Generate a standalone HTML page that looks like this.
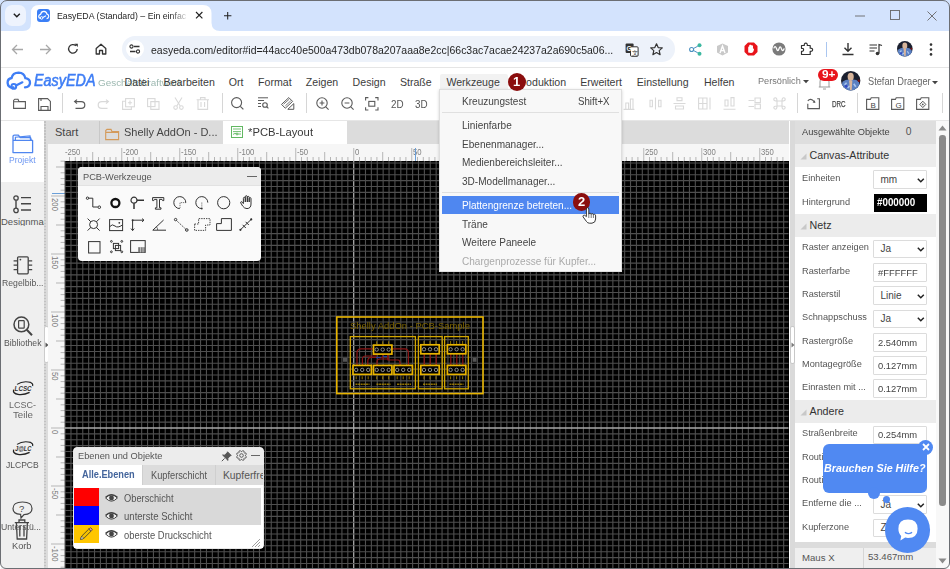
<!DOCTYPE html><html><head><meta charset="utf-8"><style>
*{margin:0;padding:0;box-sizing:border-box}
html,body{width:950px;height:569px;overflow:hidden;background:#fff}
body{position:relative;font-family:"Liberation Sans",sans-serif}
.a{position:absolute}
.t{line-height:1;white-space:nowrap}
svg{overflow:visible}
</style></head><body><div class="a" style="left:0px;top:0px;width:950px;height:31px;background:#d3e3fd"></div>
<div class="a" style="left:5px;top:5px;width:21px;height:21px;background:#eef3fd;border-radius:7px"></div>
<svg class="a" style="left:13px;top:13px;" width="8" height="5" viewBox="0 0 8 5"><path d="M0.8 0.8 L3.8 3.8 L6.8 0.8" stroke="#1f1f1f" stroke-width="1.4" fill="none"/></svg>
<svg class="a" style="left:23px;top:5px" width="198" height="26" viewBox="0 0 198 26"><path d="M0 26 Q8 26 8 18 L8 8 Q8 0 16 0 L180 0 Q188 0 188.5 8 L188.5 18 Q189 26 197 26 Z" fill="#fff"/></svg>
<div class="a" style="left:37px;top:9px;width:13px;height:13px;background:#3b7ff6;border-radius:3px"></div>
<svg class="a" style="left:37px;top:9px;" width="13" height="13" viewBox="0 0 13 13"><path d="M3.4 9.4 Q1.6 9.2 1.7 7.2 Q1.9 5.4 3.6 5.3 Q4.2 2.2 7 2.3 Q9.6 2.5 10 5.2 Q11.8 5.6 11.7 7.4 Q11.5 9.4 9.6 9.6" stroke="#fff" stroke-width="1.2" fill="none"/><circle cx="4.6" cy="8.9" r="1.3" stroke="#fff" stroke-width="1" fill="none"/><path d="M5.8 8.4 L9 6.8" stroke="#fff" stroke-width="1.1"/></svg>
<div class="a t" style="left:56.6px;top:11.29px;font-size:9.7px;color:#1f1f1f;transform:scaleX(0.9050);transform-origin:0 0;-webkit-mask-image:linear-gradient(90deg,#000 88%,rgba(0,0,0,0.15))">EasyEDA (Standard) – Ein einfac</div>
<svg class="a" style="left:195.8px;top:12.3px;" width="6.4" height="6.4" viewBox="0 0 6.4 6.4"><path d="M0 0 L6.4 6.4 M6.4 0 L0 6.4" stroke="#222" stroke-width="1.15"/></svg>
<svg class="a" style="left:223.7px;top:11.6px;" width="7.4" height="7.4" viewBox="0 0 7.4 7.4"><path d="M3.7 0 V7.4 M0 3.7 H7.4" stroke="#222" stroke-width="1.05"/></svg>
<svg class="a" style="left:855px;top:15px;" width="10" height="2" viewBox="0 0 10 2"><path d="M0 1 H10" stroke="#666" stroke-width="0.9"/></svg>
<svg class="a" style="left:890px;top:10px;" width="10" height="10" viewBox="0 0 10 10"><rect x="0.5" y="0.5" width="9" height="9" fill="none" stroke="#666" stroke-width="0.9"/></svg>
<svg class="a" style="left:927px;top:10.5px;" width="10" height="10" viewBox="0 0 10 10"><path d="M0.5 0.5 L9.5 9.5 M9.5 0.5 L0.5 9.5" stroke="#666" stroke-width="0.9"/></svg>
<div class="a" style="left:0px;top:31px;width:950px;height:37px;background:#fff;border-bottom:1px solid #e5e5e5"></div>
<svg class="a" style="left:11px;top:44px;" width="13" height="11" viewBox="0 0 13 11"><path d="M12 5.5 H1.5 M6 1 L1.5 5.5 L6 10" stroke="#a8a8a8" stroke-width="1.3" fill="none"/></svg>
<svg class="a" style="left:39px;top:44px;" width="13" height="11" viewBox="0 0 13 11"><path d="M1 5.5 H11.5 M7 1 L11.5 5.5 L7 10" stroke="#a8a8a8" stroke-width="1.3" fill="none"/></svg>
<svg class="a" style="left:67px;top:43px;" width="12" height="12" viewBox="0 0 12 12"><path d="M10.2 6 A4.3 4.3 0 1 1 8.9 2.8" stroke="#333" stroke-width="1.3" fill="none"/><path d="M7.5 0.8 L10.8 0.8 L10.8 4.1 Z" fill="#333"/></svg>
<svg class="a" style="left:95px;top:43px;" width="12" height="12" viewBox="0 0 12 12"><path d="M1.2 5.5 L6 1.2 L10.8 5.5 V11 H7.5 V7.5 H4.5 V11 H1.2 Z" stroke="#333" stroke-width="1.3" fill="none" stroke-linejoin="round"/></svg>
<div class="a" style="left:121.5px;top:36px;width:553px;height:26px;background:#edf2fa;border-radius:13px"></div>
<div class="a" style="left:125.5px;top:40px;width:18px;height:18px;background:#fff;border-radius:9px"></div>
<svg class="a" style="left:129px;top:44px;" width="12" height="10" viewBox="0 0 12 10"><circle cx="2.5" cy="2.5" r="1.6" stroke="#333" stroke-width="1.1" fill="none"/><path d="M5 2.5 H10.5 M1 7.5 H6.5" stroke="#333" stroke-width="1.3"/><circle cx="9" cy="7.5" r="1.6" stroke="#333" stroke-width="1.1" fill="none"/></svg>
<div class="a t" style="left:150.5px;top:45.21px;font-size:10.5px;color:#1f1f1f;transform:scaleX(0.9982);transform-origin:0 0;">easyeda.com/editor#id=44acc40e500a473db078a207aaa8e2cc|66c3ac7acae24237a2a690c5a06...</div>
<svg class="a" style="left:625px;top:43px;" width="14" height="14" viewBox="0 0 14 14"><rect x="0.6" y="0.6" width="8" height="9.5" rx="1" fill="#333"/><rect x="5.5" y="3.8" width="7.6" height="9.5" rx="1" fill="#fff" stroke="#333" stroke-width="1"/><text x="1.6" y="8" font-size="6.5" fill="#fff" font-family="Liberation Sans" font-weight="bold">G</text><text x="7" y="11.5" font-size="6" fill="#333" font-family="Liberation Sans">文</text></svg>
<svg class="a" style="left:650px;top:43px;" width="13" height="13" viewBox="0 0 13 13"><path d="M6.5 0.8 L8.2 4.6 L12.3 4.9 L9.2 7.6 L10.1 11.7 L6.5 9.6 L2.9 11.7 L3.8 7.6 L0.7 4.9 L4.8 4.6 Z" stroke="#333" stroke-width="1.2" fill="none" stroke-linejoin="round"/></svg>
<svg class="a" style="left:689px;top:43px;" width="13" height="13" viewBox="0 0 13 13"><circle cx="2.6" cy="6.5" r="2" fill="none" stroke="#4a90c0" stroke-width="1.1"/><circle cx="10.5" cy="2.3" r="2" fill="#3bb8a0"/><circle cx="10.5" cy="10.7" r="2" fill="#3bb8a0"/><path d="M4.3 5.6 L8.8 3.2 M4.3 7.4 L8.8 9.8" stroke="#4a90c0" stroke-width="1"/></svg>
<svg class="a" style="left:716px;top:43px;" width="13" height="13" viewBox="0 0 13 13"><path d="M6.5 0.5 L12 3 V9.5 L6.5 12.5 L1 9.5 V3 Z" fill="#c9c9c9"/><path d="M4 10 L6.5 3 L9 10 M5 7.6 H8" stroke="#fff" stroke-width="1.4" fill="none"/></svg>
<svg class="a" style="left:744px;top:42px;" width="14" height="14" viewBox="0 0 14 14"><path d="M4 0.5 H10 L13.5 4 V10 L10 13.5 H4 L0.5 10 V4 Z" fill="#e8141b"/><path d="M4.2 10.5 V5.5 Q4.2 4.3 5.2 4.6 V3.4 Q5.3 2.6 6.3 2.8 Q7.3 2.5 7.7 3.4 Q8.6 3.1 9 4 V6.7 Q9.9 6.3 10 7.3 Q9.6 10.8 7 11 Z" fill="#fff"/></svg>
<svg class="a" style="left:772px;top:42px;" width="14" height="14" viewBox="0 0 14 14"><circle cx="7" cy="7" r="6.6" fill="#7b7b7b"/><path d="M1.8 6.4 Q3.2 2.6 4.6 6.8 Q5.8 10.6 7 6.8 Q8.2 3 9.4 6.8 Q10.8 10.6 12.2 6.4" stroke="#fff" stroke-width="1.3" fill="none"/></svg>
<svg class="a" style="left:800px;top:42px;" width="14" height="14" viewBox="0 0 14 14"><path d="M1.5 3.5 H4.3 Q4 1.2 5.8 1.2 Q7.5 1.2 7.3 3.5 H10.2 V6.2 Q12.6 6 12.6 7.8 Q12.6 9.6 10.2 9.4 V12.5 H1.5 V9.4 Q3.6 9.5 3.6 7.8 Q3.6 6.1 1.5 6.3 Z" stroke="#333" stroke-width="1.2" fill="none" stroke-linejoin="round"/></svg>
<div class="a" style="left:826px;top:42px;width:1px;height:15px;background:#aac6f0"></div>
<svg class="a" style="left:841px;top:42px;" width="14" height="14" viewBox="0 0 14 14"><path d="M7 1 V9 M3.5 5.8 L7 9.3 L10.5 5.8 M1.5 12.5 H12.5" stroke="#333" stroke-width="1.4" fill="none"/></svg>
<svg class="a" style="left:869px;top:43px;" width="14" height="13" viewBox="0 0 14 13"><path d="M0.5 2 H8 M0.5 5 H8 M0.5 8 H5.5" stroke="#333" stroke-width="1.2"/><path d="M10 10.5 V1.5 L13 2.5" stroke="#333" stroke-width="1.2" fill="none"/><circle cx="8.5" cy="10.5" r="1.8" fill="#333"/></svg>
<svg class="a" style="left:896.70px;top:40.90px" width="15.60" height="15.60" viewBox="-9.5 -9.5 19 19"><defs><clipPath id="ca1"><circle cx="0" cy="0" r="9.5"/></clipPath></defs><g clip-path="url(#ca1)"><rect x="-10" y="-10" width="20" height="20" fill="#1a1f2e"/><path d="M-10 10 L-8 1 Q-4 -2 0 -1 Q5 -2 8 1 L10 10 Z" fill="#5b80c2"/><path d="M-6 4 L-4 2 M3 3 L5 6 M-3 7 L-1 5" stroke="#a8c4ee" stroke-width="1.6"/><circle cx="-4.5" cy="5.5" r="1.3" fill="#3046c8"/><ellipse cx="0" cy="-3.8" rx="3" ry="4" fill="#d6b49a"/><path d="M-1.6 0 L1.6 0 L1 9 L-0.6 9 Z" fill="#d9b59c"/><circle cx="8" cy="0" r="1.2" fill="#7a1010"/></g></svg>
<svg class="a" style="left:929px;top:43px;" width="4" height="13" viewBox="0 0 4 13"><circle cx="2" cy="1.6" r="1.3" fill="#333"/><circle cx="2" cy="6.5" r="1.3" fill="#333"/><circle cx="2" cy="11.4" r="1.3" fill="#333"/></svg>
<svg class="a" style="left:6px;top:71px;" width="26" height="19" viewBox="0 0 26 19"><path d="M7.5 16.5 Q2 16.8 1.6 11.8 Q1.6 7.6 5.6 7 Q6.8 1.6 12.6 1.6 Q18.3 1.8 19.4 7.2 Q24.2 7.8 24 12.2 Q23.6 16.3 19 16.4" stroke="#3f7ef5" stroke-width="2.3" fill="none" stroke-linecap="round"/><circle cx="7.8" cy="15.4" r="2.4" stroke="#3f7ef5" stroke-width="2" fill="none"/><path d="M10 14.4 L16.4 11.3" stroke="#3f7ef5" stroke-width="2.2" stroke-linecap="round"/></svg>
<div class="a t" style="left:33.5px;top:73.09px;font-size:15.6px;color:#3f7ef5;font-style:italic;transform:scaleX(0.9212);transform-origin:0 0;-webkit-text-stroke:0.55px #3f7ef5;">EasyEDA</div>
<div class="a t" style="left:98px;top:77.82px;font-size:9.9px;color:#9cb8b0;transform:scaleX(1.0033);transform-origin:0 0;">Geschäftskraftwerk</div>
<div class="a t" style="left:124.6px;top:76.63px;font-size:10.6px;color:#3c3c3c;">Datei</div>
<div class="a t" style="left:163.6px;top:76.63px;font-size:10.6px;color:#3c3c3c;">Bearbeiten</div>
<div class="a t" style="left:228.8px;top:76.63px;font-size:10.6px;color:#3c3c3c;">Ort</div>
<div class="a t" style="left:258.1px;top:76.63px;font-size:10.6px;color:#3c3c3c;">Format</div>
<div class="a t" style="left:305.8px;top:76.63px;font-size:10.6px;color:#3c3c3c;">Zeigen</div>
<div class="a t" style="left:352.6px;top:76.63px;font-size:10.6px;color:#3c3c3c;">Design</div>
<div class="a t" style="left:399.9px;top:76.63px;font-size:10.6px;color:#3c3c3c;">Straße</div>
<div class="a" style="left:439.5px;top:74px;width:68px;height:15px;background:#f2f2f2;border-radius:2px 2px 0 0"></div>
<div class="a t" style="left:446.4px;top:76.63px;font-size:10.6px;color:#3c3c3c;">Werkzeuge</div>
<div class="a t" style="left:515.5px;top:76.63px;font-size:10.6px;color:#3c3c3c;">Produktion</div>
<div class="a t" style="left:580.2px;top:76.63px;font-size:10.6px;color:#3c3c3c;">Erweitert</div>
<div class="a t" style="left:636.8px;top:76.63px;font-size:10.6px;color:#3c3c3c;">Einstellung</div>
<div class="a t" style="left:703.9px;top:76.63px;font-size:10.6px;color:#3c3c3c;">Helfen</div>
<div class="a t" style="left:758.4px;top:76.37px;font-size:9.6px;color:#777;transform:scaleX(0.9549);transform-origin:0 0;">Persönlich</div>
<svg class="a" style="left:803px;top:80px;" width="6" height="4" viewBox="0 0 6 4"><path d="M0 0 H6 L3 3.2 Z" fill="#444"/></svg>
<svg class="a" style="left:818px;top:74px;" width="13" height="16" viewBox="0 0 13 16"><path d="M2 13 V8 Q2 3.5 6.5 3.5 Q11 3.5 11 8 V13 M0.8 13 H12.2 M5 15 H8" stroke="#999" stroke-width="1" fill="none"/></svg>
<div class="a" style="left:818.4px;top:69.2px;width:19.6px;height:11.5px;background:#e8141b;border-radius:6px"></div>
<div class="a t" style="left:821.5px;top:70.33px;font-size:10px;color:#fff;font-weight:bold;transform:scaleX(1.1840);transform-origin:0 0;">9+</div>
<svg class="a" style="left:840.70px;top:70.60px" width="19.40" height="19.40" viewBox="-9.5 -9.5 19 19"><defs><clipPath id="ca2"><circle cx="0" cy="0" r="9.5"/></clipPath></defs><g clip-path="url(#ca2)"><rect x="-10" y="-10" width="20" height="20" fill="#1a1f2e"/><path d="M-10 10 L-8 1 Q-4 -2 0 -1 Q5 -2 8 1 L10 10 Z" fill="#5b80c2"/><path d="M-6 4 L-4 2 M3 3 L5 6 M-3 7 L-1 5" stroke="#a8c4ee" stroke-width="1.6"/><circle cx="-4.5" cy="5.5" r="1.3" fill="#3046c8"/><ellipse cx="0" cy="-3.8" rx="3" ry="4" fill="#d6b49a"/><path d="M-1.6 0 L1.6 0 L1 9 L-0.6 9 Z" fill="#d9b59c"/><circle cx="8" cy="0" r="1.2" fill="#7a1010"/></g></svg>
<div class="a t" style="left:867.9px;top:76.70px;font-size:10.4px;color:#666;transform:scaleX(0.8890);transform-origin:0 0;">Stefan Draeger</div>
<svg class="a" style="left:932px;top:81px;" width="6" height="4" viewBox="0 0 6 4"><path d="M0 0 H6 L3 3.2 Z" fill="#444"/></svg>
<svg class="a" style="left:13px;top:98px;" width="13" height="11" viewBox="0 0 13 11"><path d="M0.6 2.5 V10.4 H12.4 V3.6 H6 L5 1.2 H1.8 Z M0.6 3.8 H12.4" stroke="#5a5a5a" stroke-width="1.1" fill="none"/></svg>
<svg class="a" style="left:38px;top:98px;" width="13" height="13" viewBox="0 0 13 13"><path d="M0.6 0.6 H9.6 L12.4 3.4 V12.4 H0.6 Z" stroke="#5a5a5a" stroke-width="1.1" fill="none"/><path d="M3 12.4 V8.5 H10 V12.4 M3 0.6 V3 " stroke="#5a5a5a" stroke-width="1.1" fill="none"/></svg>
<div class="a" style="left:62px;top:93px;width:1px;height:20px;background:#d6d6d6"></div>
<svg class="a" style="left:73px;top:99px;" width="13" height="10" viewBox="0 0 13 10"><path d="M2 2.6 H8.2 Q11.8 2.6 11.8 6 Q11.8 9.4 8.2 9.4 H2.5 M4 0.6 L1.6 2.6 L4 4.6" stroke="#5a5a5a" stroke-width="1.2" fill="none"/></svg>
<svg class="a" style="left:97px;top:99px;" width="13" height="10" viewBox="0 0 13 10"><path d="M11 2.6 H4.8 Q1.2 2.6 1.2 6 Q1.2 9.4 4.8 9.4 H10.5 M9 0.6 L11.4 2.6 L9 4.6" stroke="#d9d9d9" stroke-width="1.2" fill="none"/></svg>
<svg class="a" style="left:122px;top:98px;" width="13" height="12" viewBox="0 0 13 12"><rect x="3.6" y="0.6" width="8.8" height="8.2" stroke="#d9d9d9" stroke-width="1.1" fill="none"/><path d="M3.6 3.2 H0.6 V11.4 H9.4 V8.8" stroke="#d9d9d9" stroke-width="1.1" fill="none"/><path d="M8 2.6 V6.8 M5.9 4.7 H10.1" stroke="#d9d9d9" stroke-width="1.1" fill="none"/></svg>
<svg class="a" style="left:147px;top:98px;" width="13" height="12" viewBox="0 0 13 12"><rect x="0.6" y="0.6" width="7.4" height="8" stroke="#d9d9d9" stroke-width="1.1" fill="none"/><path d="M3.8 3.6 H12 V11.4 H3.8 Z" stroke="#d9d9d9" stroke-width="1.1" fill="none"/></svg>
<svg class="a" style="left:173px;top:97px;" width="11" height="13" viewBox="0 0 11 13"><path d="M2 0.5 L7.2 9 M9 0.5 L3.8 9" stroke="#d9d9d9" stroke-width="1.1"/><ellipse cx="2.6" cy="10.6" rx="1.8" ry="1.8" stroke="#d9d9d9" stroke-width="1.1" fill="none"/><ellipse cx="8.4" cy="10.6" rx="1.8" ry="1.8" stroke="#d9d9d9" stroke-width="1.1" fill="none"/></svg>
<svg class="a" style="left:196px;top:97px;" width="14" height="13" viewBox="0 0 14 13"><path d="M0.6 2.8 H13 M4.5 2.8 V0.6 H9 V2.8 M2 2.8 V12.4 H11.6 V2.8 M5 5 V10 M8.6 5 V10" stroke="#d9d9d9" stroke-width="1.1" fill="none"/></svg>
<div class="a" style="left:221.5px;top:93px;width:1px;height:20px;background:#d6d6d6"></div>
<svg class="a" style="left:231px;top:97px;" width="13" height="13" viewBox="0 0 13 13"><circle cx="5.6" cy="5.6" r="5" stroke="#5a5a5a" stroke-width="1.1" fill="none"/><path d="M9.3 9.3 L12.4 12.4" stroke="#5a5a5a" stroke-width="1.2"/></svg>
<svg class="a" style="left:257px;top:97px;" width="12" height="12" viewBox="0 0 12 12"><path d="M1 0.8 H11 M1 3.5 H7 M1 6.5 H4 M1 9.5 H4" stroke="#5a5a5a" stroke-width="1"/><circle cx="8" cy="8" r="2.3" stroke="#5a5a5a" stroke-width="1.1" fill="none"/><path d="M9.7 9.7 L11.4 11.4" stroke="#5a5a5a" stroke-width="1.1"/></svg>
<svg class="a" style="left:281px;top:97px;" width="14" height="13" viewBox="0 0 14 13"><path d="M0.5 7.4 L7.8 0.6 L11.6 4.4 L4.3 11.2 Z" stroke="#5a5a5a" stroke-width="1" fill="none" stroke-linejoin="round"/><path d="M2.6 7.2 L8.2 2.2 M4.4 8.8 L9.8 3.8" stroke="#5a5a5a" stroke-width="0.8"/><path d="M6.8 12.3 H12.8 V6.6 Z" stroke="#5a5a5a" stroke-width="1" fill="none" stroke-linejoin="round"/></svg>
<div class="a" style="left:306.4px;top:93px;width:1px;height:20px;background:#d6d6d6"></div>
<svg class="a" style="left:316px;top:97px;" width="14" height="14" viewBox="0 0 14 14"><circle cx="6" cy="6" r="5.2" stroke="#5a5a5a" stroke-width="1.1" fill="none"/><path d="M9.8 9.8 L12.6 12.6 M6 3.6 V8.4 M3.6 6 H8.4" stroke="#5a5a5a" stroke-width="1.1"/></svg>
<svg class="a" style="left:341px;top:97px;" width="14" height="14" viewBox="0 0 14 14"><circle cx="6" cy="6" r="5.2" stroke="#5a5a5a" stroke-width="1.1" fill="none"/><path d="M9.8 9.8 L12.6 12.6 M3.6 6 H8.4" stroke="#5a5a5a" stroke-width="1.1"/></svg>
<svg class="a" style="left:365px;top:97px;" width="14" height="14" viewBox="0 0 14 14"><path d="M0.6 3.4 V0.6 H3.4 M10.2 0.6 H13 V3.4 M13 10.2 V13 H10.2 M3.4 13 H0.6 V10.2" stroke="#5a5a5a" stroke-width="1.1" fill="none"/><rect x="3.8" y="4.4" width="6" height="4.8" stroke="#5a5a5a" stroke-width="1.1" fill="none"/></svg>
<div class="a t" style="left:390.6px;top:98.83px;font-size:10.6px;color:#555;transform:scaleX(0.9299);transform-origin:0 0;">2D</div>
<div class="a t" style="left:415px;top:98.83px;font-size:10.6px;color:#555;transform:scaleX(0.9299);transform-origin:0 0;">3D</div>
<svg class="a" style="left:623px;top:97px;" width="12" height="13" viewBox="0 0 12 13"><path d="M0.6 12.4 H11.4 M2.8 12.4 V6 H5.6 V12.4 M7.4 12.4 V2 H10 V12.4" stroke="#d9d9d9" stroke-width="1.1" fill="none"/></svg>
<svg class="a" style="left:649px;top:97px;" width="13" height="13" viewBox="0 0 13 13"><path d="M6.5 0.5 V12.5 M3.4 3.2 V9.8 H1 V3.2 Z M9.6 3.2 V9.8 H12 V3.2 Z" stroke="#d9d9d9" stroke-width="1.1" fill="none"/></svg>
<svg class="a" style="left:673px;top:97px;" width="13" height="13" viewBox="0 0 13 13"><path d="M0.5 6.5 H12.5 M4 0.8 H9 V3.6 H4 Z M2.5 9 H10.5 V12 H2.5 Z" stroke="#d9d9d9" stroke-width="1.1" fill="none"/></svg>
<svg class="a" style="left:698px;top:97px;" width="13" height="13" viewBox="0 0 13 13"><path d="M0.6 1 V12 H9 V1 Z M4.8 1 V12 M0.6 6.5 H9 M12 0.5 V12.5" stroke="#d9d9d9" stroke-width="1.1" fill="none"/></svg>
<svg class="a" style="left:723px;top:97px;" width="13" height="13" viewBox="0 0 13 13"><path d="M2 3 H5 V9 H2 Z M8 0.6 H11 V9 H8 Z M0.5 12.2 H12.5" stroke="#d9d9d9" stroke-width="1.1" fill="none"/></svg>
<svg class="a" style="left:748px;top:97px;" width="13" height="13" viewBox="0 0 13 13"><path d="M0.5 3.5 H6 M0.5 9.5 H6 M7 1 H12.4 V5.6 H7 Z M7 7.2 H12.4 V11.8 H7 Z" stroke="#d9d9d9" stroke-width="1.1" fill="none"/></svg>
<svg class="a" style="left:773px;top:97px;" width="13" height="13" viewBox="0 0 13 13"><path d="M4 4 H9 V9 H4 Z M4 4 Q0.8 4 0.8 2.4 Q0.8 0.8 2.4 0.8 Q4 0.8 4 4 M9 4 Q12.2 4 12.2 2.4 Q12.2 0.8 10.6 0.8 Q9 0.8 9 4 M4 9 Q0.8 9 0.8 10.6 Q0.8 12.2 2.4 12.2 Q4 12.2 4 9 M9 9 Q12.2 9 12.2 10.6 Q12.2 12.2 10.6 12.2 Q9 12.2 9 9" stroke="#d9d9d9" stroke-width="1.1" fill="none"/></svg>
<div class="a" style="left:797px;top:93px;width:1px;height:20px;background:#d6d6d6"></div>
<svg class="a" style="left:807px;top:97px;" width="14" height="13" viewBox="0 0 14 13"><path d="M0.8 6.8 V11.6 H12.4 V1.8 H10.2" stroke="#5a5a5a" stroke-width="1.1" fill="none"/><path d="M0.8 3.8 Q3.6 0.6 7.2 4.6" stroke="#5a5a5a" stroke-width="1.1" fill="none"/><path d="M5.6 5.6 L8.4 6 L7.8 3.2 Z" fill="#5a5a5a"/></svg>
<div class="a t" style="left:831.8px;top:99.78px;font-size:9px;color:#4a4a4a;transform:scaleX(0.6975);transform-origin:0 0;-webkit-text-stroke:0.25px #4a4a4a;">DRC</div>
<div class="a" style="left:857px;top:93px;width:1px;height:20px;background:#d6d6d6"></div>
<svg class="a" style="left:866px;top:97px;" width="14" height="13" viewBox="0 0 14 13"><path d="M0.6 2.4 H4.4 L5.2 0.8 H12.8 V12.4 H0.6 Z" stroke="#5a5a5a" stroke-width="1.1" fill="none"/></svg>
<div class="a t" style="left:870.4px;top:102.43px;font-size:8px;color:#444;">B</div>
<svg class="a" style="left:891px;top:97px;" width="14" height="13" viewBox="0 0 14 13"><path d="M0.6 2.4 H4.4 L5.2 0.8 H12.8 V12.4 H0.6 Z" stroke="#5a5a5a" stroke-width="1.1" fill="none"/></svg>
<div class="a t" style="left:895.4px;top:102.43px;font-size:8px;color:#444;">G</div>
<svg class="a" style="left:916px;top:97px;" width="14" height="13" viewBox="0 0 14 13"><path d="M0.6 2.4 H4.4 L5.2 0.8 H12.8 V12.4 H0.6 Z" stroke="#5a5a5a" stroke-width="1.1" fill="none"/><path d="M6.8 4.2 L9.8 7.4 L6.8 10.6 L3.8 7.4 Z" stroke="#5a5a5a" stroke-width="1" fill="none"/><circle cx="6.8" cy="7.4" r="0.9" fill="#5a5a5a"/></svg>
<div class="a" style="left:942px;top:93px;width:1px;height:20px;background:#d6d6d6"></div>
<div class="a" style="left:0px;top:119.5px;width:950px;height:1px;background:#e6e6e6"></div>
<div class="a" style="left:48px;top:120.5px;width:742px;height:23.5px;background:#dcdcdc"></div>
<div class="a" style="left:98.5px;top:120.5px;width:1px;height:23.5px;background:#c8c8c8"></div>
<div class="a" style="left:222.5px;top:120.5px;width:1px;height:23.5px;background:#c8c8c8"></div>
<div class="a" style="left:223px;top:120.5px;width:124px;height:23.5px;background:#fff"></div>
<div class="a t" style="left:55px;top:126.99px;font-size:11px;color:#444;">Start</div>
<svg class="a" style="left:105px;top:128px;" width="15" height="13" viewBox="0 0 15 13"><path d="M0.7 2.6 V11.6 H13.6 V3.6 H7 L6 1.4 H2 Z M0.7 4.4 H13.6" stroke="#d49a5a" stroke-width="1.1" fill="none"/></svg>
<div class="a t" style="left:123.5px;top:126.99px;font-size:11px;color:#444;transform:scaleX(0.9996);transform-origin:0 0;">Shelly AddOn - D...</div>
<svg class="a" style="left:230.5px;top:126px;" width="12" height="12" viewBox="0 0 12 12"><rect x="0.5" y="0.5" width="11" height="11" stroke="#62b862" stroke-width="1" fill="none"/><path d="M2 3 H10 M2 5.6 H10 M2 8.4 Q4 6.6 6 8 H10" stroke="#62b862" stroke-width="0.9" fill="none"/><circle cx="6" cy="8" r="1" fill="none" stroke="#62b862" stroke-width="0.8"/></svg>
<div class="a t" style="left:248px;top:126.99px;font-size:11px;color:#3a3a3a;transform:scaleX(1.0222);transform-origin:0 0;">*PCB-Layout</div>
<div class="a" style="left:1px;top:120.5px;width:43px;height:449px;background:#efefef"></div>
<div class="a" style="left:1px;top:120.5px;width:43px;height:61.5px;background:#fff"></div>
<div class="a" style="left:43.5px;top:120.5px;width:5px;height:449px;background:#dcdcdc"></div>
<div class="a" style="left:44px;top:120.5px;width:2px;height:449px;background:repeating-linear-gradient(180deg,#c2c2c2 0 1.5px,#d6d6d6 1.5px 3px)"></div>
<svg class="a" style="left:12px;top:134px;" width="22" height="20" viewBox="0 0 22 20"><path d="M1 5.2 V18.6 H20.6 V6.4 H1 M1 5.2 V2.6 Q1 1.2 2.4 1.2 H6.4 L8.2 3.6 H18.6 L19.4 6.4" stroke="#4f86f0" stroke-width="1.3" fill="none" stroke-linejoin="round"/><path d="M3.4 6.4 V3.2 L18 2 L18.6 6.4" stroke="#4f86f0" stroke-width="1.2" fill="none"/></svg>
<div class="a t" style="left:9px;top:155.26px;font-size:9.5px;color:#6d97f2;transform:scaleX(0.8963);transform-origin:0 0;">Projekt</div>
<svg class="a" style="left:13px;top:195px;" width="19" height="19" viewBox="0 0 19 19"><circle cx="3" cy="3" r="2.2" stroke="#444" stroke-width="1.3" fill="none"/><circle cx="3" cy="15.4" r="2.2" stroke="#444" stroke-width="1.3" fill="none"/><path d="M3 5.2 V13.2 M8 2.6 H18 M8 8.8 H18 M8 15 H18" stroke="#444" stroke-width="1.4"/></svg>
<div class="a t" style="left:1px;top:216.66px;font-size:9.5px;color:#555;width:43px;overflow:hidden">Designmanager</div>
<svg class="a" style="left:13px;top:256px;" width="20" height="19" viewBox="0 0 20 19"><rect x="4.6" y="0.8" width="10.6" height="17" rx="1" stroke="#444" stroke-width="1.3" fill="none"/><circle cx="7.4" cy="3.6" r="0.9" fill="#444"/><path d="M0.6 4.8 H4.6 M0.6 9.2 H4.6 M0.6 13.6 H4.6 M15.2 4.8 H19.2 M15.2 9.2 H19.2 M15.2 13.6 H19.2" stroke="#444" stroke-width="1.3"/></svg>
<div class="a t" style="left:1.5px;top:277.56px;font-size:9.5px;color:#555;transform:scaleX(0.9138);transform-origin:0 0;">Regelbib...</div>
<svg class="a" style="left:13px;top:316px;" width="20" height="21" viewBox="0 0 20 21"><circle cx="8.4" cy="8.4" r="7.4" stroke="#444" stroke-width="1.5" fill="none"/><rect x="5.6" y="4.6" width="5.6" height="7.6" rx="0.6" stroke="#444" stroke-width="1.2" fill="none"/><path d="M13.8 13.8 L19 19.2" stroke="#444" stroke-width="2"/></svg>
<div class="a t" style="left:3.5px;top:337.96px;font-size:9.5px;color:#555;transform:scaleX(0.9104);transform-origin:0 0;">Bibliothek</div>
<div class="a" style="left:43.5px;top:326px;width:5px;height:37px;background:#fff;border:1px solid #ccc;border-radius:2px"></div>
<svg class="a" style="left:44.5px;top:342px;" width="4" height="6" viewBox="0 0 4 6"><path d="M0.5 0.5 L3.5 3 L0.5 5.5 Z" fill="#555"/></svg>
<svg class="a" style="left:12px;top:381px;" width="22" height="15" viewBox="0 0 22 15"><path d="M5 3.4 Q11 -0.6 18.6 1.4 Q21.4 2.4 20.6 5" stroke="#222" stroke-width="1.1" fill="none"/><path d="M1.6 8.6 Q0.6 12.6 6 13.4 Q12 14.2 17.6 11.4" stroke="#222" stroke-width="1.3" fill="none"/><text x="2.6" y="10" font-size="7.4" font-weight="bold" font-style="italic" fill="#333" font-family="Liberation Sans" textLength="17" lengthAdjust="spacingAndGlyphs">LCSC</text></svg>
<div class="a t" style="left:9px;top:399.76px;font-size:9.5px;color:#666;transform:scaleX(0.9472);transform-origin:0 0;">LCSC-</div>
<div class="a t" style="left:12.5px;top:410.46px;font-size:9.5px;color:#666;transform:scaleX(1.0237);transform-origin:0 0;">Teile</div>
<svg class="a" style="left:12px;top:441px;" width="22" height="15" viewBox="0 0 22 15"><path d="M5 3.4 Q11 -0.6 18.6 1.4 Q21.4 2.4 20.6 5" stroke="#222" stroke-width="1.1" fill="none"/><path d="M1.6 8.6 Q0.6 12.6 6 13.4 Q12 14.2 17.6 11.4" stroke="#222" stroke-width="1.3" fill="none"/><text x="3" y="10" font-size="7.4" font-weight="bold" font-style="italic" fill="#333" font-family="Liberation Sans" textLength="16.5" lengthAdjust="spacingAndGlyphs">J@LC</text></svg>
<div class="a t" style="left:5.8px;top:460.36px;font-size:9.5px;color:#555;transform:scaleX(0.8977);transform-origin:0 0;">JLCPCB</div>
<svg class="a" style="left:12px;top:501px;" width="21" height="18" viewBox="0 0 21 18"><path d="M10.5 1 Q20 1 20 7.5 Q20 13.4 12 13.6 L9 17 L8.6 13.4 Q1 13 1 7.5 Q1 1 10.5 1 Z" stroke="#444" stroke-width="1.2" fill="none"/><text x="7" y="11" font-size="9.5" fill="#444" font-family="Liberation Sans">?</text></svg>
<svg class="a" style="left:14px;top:519px;" width="16" height="21" viewBox="0 0 16 21"><path d="M0.8 3.6 H15 M5 3.6 V1 H10.8 V3.6 M2.4 3.6 L3.2 20 H12.6 L13.4 3.6 M5.8 6.5 V17.4 M10 6.5 V17.4" stroke="#444" stroke-width="1.3" fill="none"/></svg>
<div class="a t" style="left:0.5px;top:521.96px;font-size:9.5px;color:#555;transform:scaleX(0.9129);transform-origin:0 0;">Unterstü...</div>
<div class="a t" style="left:12px;top:541.26px;font-size:9.5px;color:#555;transform:scaleX(0.9718);transform-origin:0 0;">Korb</div>
<div class="a" style="left:48px;top:144px;width:741px;height:17px;background:#f6f6f6"></div>
<div class="a" style="left:48px;top:161px;width:17px;height:408px;background:#f6f6f6"></div>
<svg class="a" style="left:48px;top:144px" width="741" height="17"><path d="M21.50 13 V17" stroke="#b5b5b5" stroke-width="1"/><path d="M27.30 13 V17" stroke="#b5b5b5" stroke-width="1"/><path d="M33.10 13 V17" stroke="#b5b5b5" stroke-width="1"/><path d="M38.90 13 V17" stroke="#b5b5b5" stroke-width="1"/><path d="M44.70 8 V17" stroke="#b5b5b5" stroke-width="1"/><path d="M50.50 13 V17" stroke="#b5b5b5" stroke-width="1"/><path d="M56.30 13 V17" stroke="#b5b5b5" stroke-width="1"/><path d="M62.10 13 V17" stroke="#b5b5b5" stroke-width="1"/><path d="M67.90 13 V17" stroke="#b5b5b5" stroke-width="1"/><path d="M73.70 4 V17" stroke="#c2c2c2" stroke-width="1.2"/><path d="M79.50 13 V17" stroke="#b5b5b5" stroke-width="1"/><path d="M85.30 13 V17" stroke="#b5b5b5" stroke-width="1"/><path d="M91.10 13 V17" stroke="#b5b5b5" stroke-width="1"/><path d="M96.90 13 V17" stroke="#b5b5b5" stroke-width="1"/><path d="M102.70 8 V17" stroke="#b5b5b5" stroke-width="1"/><path d="M108.50 13 V17" stroke="#b5b5b5" stroke-width="1"/><path d="M114.30 13 V17" stroke="#b5b5b5" stroke-width="1"/><path d="M120.10 13 V17" stroke="#b5b5b5" stroke-width="1"/><path d="M125.90 13 V17" stroke="#b5b5b5" stroke-width="1"/><path d="M131.70 4 V17" stroke="#c2c2c2" stroke-width="1.2"/><path d="M137.50 13 V17" stroke="#b5b5b5" stroke-width="1"/><path d="M143.30 13 V17" stroke="#b5b5b5" stroke-width="1"/><path d="M149.10 13 V17" stroke="#b5b5b5" stroke-width="1"/><path d="M154.90 13 V17" stroke="#b5b5b5" stroke-width="1"/><path d="M160.70 8 V17" stroke="#b5b5b5" stroke-width="1"/><path d="M166.50 13 V17" stroke="#b5b5b5" stroke-width="1"/><path d="M172.30 13 V17" stroke="#b5b5b5" stroke-width="1"/><path d="M178.10 13 V17" stroke="#b5b5b5" stroke-width="1"/><path d="M183.90 13 V17" stroke="#b5b5b5" stroke-width="1"/><path d="M189.70 4 V17" stroke="#c2c2c2" stroke-width="1.2"/><path d="M195.50 13 V17" stroke="#b5b5b5" stroke-width="1"/><path d="M201.30 13 V17" stroke="#b5b5b5" stroke-width="1"/><path d="M207.10 13 V17" stroke="#b5b5b5" stroke-width="1"/><path d="M212.90 13 V17" stroke="#b5b5b5" stroke-width="1"/><path d="M218.70 8 V17" stroke="#b5b5b5" stroke-width="1"/><path d="M224.50 13 V17" stroke="#b5b5b5" stroke-width="1"/><path d="M230.30 13 V17" stroke="#b5b5b5" stroke-width="1"/><path d="M236.10 13 V17" stroke="#b5b5b5" stroke-width="1"/><path d="M241.90 13 V17" stroke="#b5b5b5" stroke-width="1"/><path d="M247.70 4 V17" stroke="#c2c2c2" stroke-width="1.2"/><path d="M253.50 13 V17" stroke="#b5b5b5" stroke-width="1"/><path d="M259.30 13 V17" stroke="#b5b5b5" stroke-width="1"/><path d="M265.10 13 V17" stroke="#b5b5b5" stroke-width="1"/><path d="M270.90 13 V17" stroke="#b5b5b5" stroke-width="1"/><path d="M276.70 8 V17" stroke="#b5b5b5" stroke-width="1"/><path d="M282.50 13 V17" stroke="#b5b5b5" stroke-width="1"/><path d="M288.30 13 V17" stroke="#b5b5b5" stroke-width="1"/><path d="M294.10 13 V17" stroke="#b5b5b5" stroke-width="1"/><path d="M299.90 13 V17" stroke="#b5b5b5" stroke-width="1"/><path d="M305.70 4 V17" stroke="#c2c2c2" stroke-width="1.2"/><path d="M311.50 13 V17" stroke="#b5b5b5" stroke-width="1"/><path d="M317.30 13 V17" stroke="#b5b5b5" stroke-width="1"/><path d="M323.10 13 V17" stroke="#b5b5b5" stroke-width="1"/><path d="M328.90 13 V17" stroke="#b5b5b5" stroke-width="1"/><path d="M334.70 8 V17" stroke="#b5b5b5" stroke-width="1"/><path d="M340.50 13 V17" stroke="#b5b5b5" stroke-width="1"/><path d="M346.30 13 V17" stroke="#b5b5b5" stroke-width="1"/><path d="M352.10 13 V17" stroke="#b5b5b5" stroke-width="1"/><path d="M357.90 13 V17" stroke="#b5b5b5" stroke-width="1"/><path d="M363.70 4 V17" stroke="#c2c2c2" stroke-width="1.2"/><path d="M369.50 13 V17" stroke="#b5b5b5" stroke-width="1"/><path d="M375.30 13 V17" stroke="#b5b5b5" stroke-width="1"/><path d="M381.10 13 V17" stroke="#b5b5b5" stroke-width="1"/><path d="M386.90 13 V17" stroke="#b5b5b5" stroke-width="1"/><path d="M392.70 8 V17" stroke="#b5b5b5" stroke-width="1"/><path d="M398.50 13 V17" stroke="#b5b5b5" stroke-width="1"/><path d="M404.30 13 V17" stroke="#b5b5b5" stroke-width="1"/><path d="M410.10 13 V17" stroke="#b5b5b5" stroke-width="1"/><path d="M415.90 13 V17" stroke="#b5b5b5" stroke-width="1"/><path d="M421.70 4 V17" stroke="#c2c2c2" stroke-width="1.2"/><path d="M427.50 13 V17" stroke="#b5b5b5" stroke-width="1"/><path d="M433.30 13 V17" stroke="#b5b5b5" stroke-width="1"/><path d="M439.10 13 V17" stroke="#b5b5b5" stroke-width="1"/><path d="M444.90 13 V17" stroke="#b5b5b5" stroke-width="1"/><path d="M450.70 8 V17" stroke="#b5b5b5" stroke-width="1"/><path d="M456.50 13 V17" stroke="#b5b5b5" stroke-width="1"/><path d="M462.30 13 V17" stroke="#b5b5b5" stroke-width="1"/><path d="M468.10 13 V17" stroke="#b5b5b5" stroke-width="1"/><path d="M473.90 13 V17" stroke="#b5b5b5" stroke-width="1"/><path d="M479.70 4 V17" stroke="#c2c2c2" stroke-width="1.2"/><path d="M485.50 13 V17" stroke="#b5b5b5" stroke-width="1"/><path d="M491.30 13 V17" stroke="#b5b5b5" stroke-width="1"/><path d="M497.10 13 V17" stroke="#b5b5b5" stroke-width="1"/><path d="M502.90 13 V17" stroke="#b5b5b5" stroke-width="1"/><path d="M508.70 8 V17" stroke="#b5b5b5" stroke-width="1"/><path d="M514.50 13 V17" stroke="#b5b5b5" stroke-width="1"/><path d="M520.30 13 V17" stroke="#b5b5b5" stroke-width="1"/><path d="M526.10 13 V17" stroke="#b5b5b5" stroke-width="1"/><path d="M531.90 13 V17" stroke="#b5b5b5" stroke-width="1"/><path d="M537.70 4 V17" stroke="#c2c2c2" stroke-width="1.2"/><path d="M543.50 13 V17" stroke="#b5b5b5" stroke-width="1"/><path d="M549.30 13 V17" stroke="#b5b5b5" stroke-width="1"/><path d="M555.10 13 V17" stroke="#b5b5b5" stroke-width="1"/><path d="M560.90 13 V17" stroke="#b5b5b5" stroke-width="1"/><path d="M566.70 8 V17" stroke="#b5b5b5" stroke-width="1"/><path d="M572.50 13 V17" stroke="#b5b5b5" stroke-width="1"/><path d="M578.30 13 V17" stroke="#b5b5b5" stroke-width="1"/><path d="M584.10 13 V17" stroke="#b5b5b5" stroke-width="1"/><path d="M589.90 13 V17" stroke="#b5b5b5" stroke-width="1"/><path d="M595.70 4 V17" stroke="#c2c2c2" stroke-width="1.2"/><path d="M601.50 13 V17" stroke="#b5b5b5" stroke-width="1"/><path d="M607.30 13 V17" stroke="#b5b5b5" stroke-width="1"/><path d="M613.10 13 V17" stroke="#b5b5b5" stroke-width="1"/><path d="M618.90 13 V17" stroke="#b5b5b5" stroke-width="1"/><path d="M624.70 8 V17" stroke="#b5b5b5" stroke-width="1"/><path d="M630.50 13 V17" stroke="#b5b5b5" stroke-width="1"/><path d="M636.30 13 V17" stroke="#b5b5b5" stroke-width="1"/><path d="M642.10 13 V17" stroke="#b5b5b5" stroke-width="1"/><path d="M647.90 13 V17" stroke="#b5b5b5" stroke-width="1"/><path d="M653.70 4 V17" stroke="#c2c2c2" stroke-width="1.2"/><path d="M659.50 13 V17" stroke="#b5b5b5" stroke-width="1"/><path d="M665.30 13 V17" stroke="#b5b5b5" stroke-width="1"/><path d="M671.10 13 V17" stroke="#b5b5b5" stroke-width="1"/><path d="M676.90 13 V17" stroke="#b5b5b5" stroke-width="1"/><path d="M682.70 8 V17" stroke="#b5b5b5" stroke-width="1"/><path d="M688.50 13 V17" stroke="#b5b5b5" stroke-width="1"/><path d="M694.30 13 V17" stroke="#b5b5b5" stroke-width="1"/><path d="M700.10 13 V17" stroke="#b5b5b5" stroke-width="1"/><path d="M705.90 13 V17" stroke="#b5b5b5" stroke-width="1"/><path d="M711.70 4 V17" stroke="#c2c2c2" stroke-width="1.2"/><path d="M717.50 13 V17" stroke="#b5b5b5" stroke-width="1"/><path d="M723.30 13 V17" stroke="#b5b5b5" stroke-width="1"/><path d="M729.10 13 V17" stroke="#b5b5b5" stroke-width="1"/><path d="M734.90 13 V17" stroke="#b5b5b5" stroke-width="1"/></svg>
<div class="a t" style="left:65.29999999999998px;top:147.75px;font-size:8.8px;color:#808080;transform:scaleX(0.8750);transform-origin:0 0;">-250</div>
<div class="a t" style="left:123.30000000000001px;top:147.75px;font-size:8.8px;color:#808080;transform:scaleX(0.8750);transform-origin:0 0;">-200</div>
<div class="a t" style="left:181.29999999999998px;top:147.75px;font-size:8.8px;color:#808080;transform:scaleX(0.8750);transform-origin:0 0;">-150</div>
<div class="a t" style="left:239.29999999999998px;top:147.75px;font-size:8.8px;color:#808080;transform:scaleX(0.8750);transform-origin:0 0;">-100</div>
<div class="a t" style="left:297.3px;top:147.75px;font-size:8.8px;color:#808080;transform:scaleX(0.8750);transform-origin:0 0;">-50</div>
<div class="a t" style="left:355.3px;top:147.75px;font-size:8.8px;color:#808080;transform:scaleX(0.8750);transform-origin:0 0;">0</div>
<div class="a t" style="left:413.3px;top:147.75px;font-size:8.8px;color:#808080;transform:scaleX(0.8750);transform-origin:0 0;">50</div>
<div class="a t" style="left:471.3px;top:147.75px;font-size:8.8px;color:#808080;transform:scaleX(0.8750);transform-origin:0 0;">100</div>
<div class="a t" style="left:529.3000000000001px;top:147.75px;font-size:8.8px;color:#808080;transform:scaleX(0.8750);transform-origin:0 0;">150</div>
<div class="a t" style="left:587.3px;top:147.75px;font-size:8.8px;color:#808080;transform:scaleX(0.8750);transform-origin:0 0;">200</div>
<div class="a t" style="left:645.3000000000001px;top:147.75px;font-size:8.8px;color:#808080;transform:scaleX(0.8750);transform-origin:0 0;">250</div>
<div class="a t" style="left:703.3000000000001px;top:147.75px;font-size:8.8px;color:#808080;transform:scaleX(0.8750);transform-origin:0 0;">300</div>
<div class="a t" style="left:761.3000000000001px;top:147.75px;font-size:8.8px;color:#808080;transform:scaleX(0.8750);transform-origin:0 0;">350</div>
<svg class="a" style="left:48px;top:161px" width="17" height="408"><path d="M12.6 406.20 H17" stroke="#b5b5b5" stroke-width="1"/><path d="M12.6 400.40 H17" stroke="#b5b5b5" stroke-width="1"/><path d="M12.6 394.60 H17" stroke="#b5b5b5" stroke-width="1"/><path d="M12.6 388.80 H17" stroke="#b5b5b5" stroke-width="1"/><path d="M3 383.00 H17" stroke="#c2c2c2" stroke-width="1.2"/><path d="M12.6 377.20 H17" stroke="#b5b5b5" stroke-width="1"/><path d="M12.6 371.40 H17" stroke="#b5b5b5" stroke-width="1"/><path d="M12.6 365.60 H17" stroke="#b5b5b5" stroke-width="1"/><path d="M12.6 359.80 H17" stroke="#b5b5b5" stroke-width="1"/><path d="M8 354.00 H17" stroke="#b5b5b5" stroke-width="1"/><path d="M12.6 348.20 H17" stroke="#b5b5b5" stroke-width="1"/><path d="M12.6 342.40 H17" stroke="#b5b5b5" stroke-width="1"/><path d="M12.6 336.60 H17" stroke="#b5b5b5" stroke-width="1"/><path d="M12.6 330.80 H17" stroke="#b5b5b5" stroke-width="1"/><path d="M3 325.00 H17" stroke="#c2c2c2" stroke-width="1.2"/><path d="M12.6 319.20 H17" stroke="#b5b5b5" stroke-width="1"/><path d="M12.6 313.40 H17" stroke="#b5b5b5" stroke-width="1"/><path d="M12.6 307.60 H17" stroke="#b5b5b5" stroke-width="1"/><path d="M12.6 301.80 H17" stroke="#b5b5b5" stroke-width="1"/><path d="M8 296.00 H17" stroke="#b5b5b5" stroke-width="1"/><path d="M12.6 290.20 H17" stroke="#b5b5b5" stroke-width="1"/><path d="M12.6 284.40 H17" stroke="#b5b5b5" stroke-width="1"/><path d="M12.6 278.60 H17" stroke="#b5b5b5" stroke-width="1"/><path d="M12.6 272.80 H17" stroke="#b5b5b5" stroke-width="1"/><path d="M3 267.00 H17" stroke="#c2c2c2" stroke-width="1.2"/><path d="M12.6 261.20 H17" stroke="#b5b5b5" stroke-width="1"/><path d="M12.6 255.40 H17" stroke="#b5b5b5" stroke-width="1"/><path d="M12.6 249.60 H17" stroke="#b5b5b5" stroke-width="1"/><path d="M12.6 243.80 H17" stroke="#b5b5b5" stroke-width="1"/><path d="M8 238.00 H17" stroke="#b5b5b5" stroke-width="1"/><path d="M12.6 232.20 H17" stroke="#b5b5b5" stroke-width="1"/><path d="M12.6 226.40 H17" stroke="#b5b5b5" stroke-width="1"/><path d="M12.6 220.60 H17" stroke="#b5b5b5" stroke-width="1"/><path d="M12.6 214.80 H17" stroke="#b5b5b5" stroke-width="1"/><path d="M3 209.00 H17" stroke="#c2c2c2" stroke-width="1.2"/><path d="M12.6 203.20 H17" stroke="#b5b5b5" stroke-width="1"/><path d="M12.6 197.40 H17" stroke="#b5b5b5" stroke-width="1"/><path d="M12.6 191.60 H17" stroke="#b5b5b5" stroke-width="1"/><path d="M12.6 185.80 H17" stroke="#b5b5b5" stroke-width="1"/><path d="M8 180.00 H17" stroke="#b5b5b5" stroke-width="1"/><path d="M12.6 174.20 H17" stroke="#b5b5b5" stroke-width="1"/><path d="M12.6 168.40 H17" stroke="#b5b5b5" stroke-width="1"/><path d="M12.6 162.60 H17" stroke="#b5b5b5" stroke-width="1"/><path d="M12.6 156.80 H17" stroke="#b5b5b5" stroke-width="1"/><path d="M3 151.00 H17" stroke="#c2c2c2" stroke-width="1.2"/><path d="M12.6 145.20 H17" stroke="#b5b5b5" stroke-width="1"/><path d="M12.6 139.40 H17" stroke="#b5b5b5" stroke-width="1"/><path d="M12.6 133.60 H17" stroke="#b5b5b5" stroke-width="1"/><path d="M12.6 127.80 H17" stroke="#b5b5b5" stroke-width="1"/><path d="M8 122.00 H17" stroke="#b5b5b5" stroke-width="1"/><path d="M12.6 116.20 H17" stroke="#b5b5b5" stroke-width="1"/><path d="M12.6 110.40 H17" stroke="#b5b5b5" stroke-width="1"/><path d="M12.6 104.60 H17" stroke="#b5b5b5" stroke-width="1"/><path d="M12.6 98.80 H17" stroke="#b5b5b5" stroke-width="1"/><path d="M3 93.00 H17" stroke="#c2c2c2" stroke-width="1.2"/><path d="M12.6 87.20 H17" stroke="#b5b5b5" stroke-width="1"/><path d="M12.6 81.40 H17" stroke="#b5b5b5" stroke-width="1"/><path d="M12.6 75.60 H17" stroke="#b5b5b5" stroke-width="1"/><path d="M12.6 69.80 H17" stroke="#b5b5b5" stroke-width="1"/><path d="M8 64.00 H17" stroke="#b5b5b5" stroke-width="1"/><path d="M12.6 58.20 H17" stroke="#b5b5b5" stroke-width="1"/><path d="M12.6 52.40 H17" stroke="#b5b5b5" stroke-width="1"/><path d="M12.6 46.60 H17" stroke="#b5b5b5" stroke-width="1"/><path d="M12.6 40.80 H17" stroke="#b5b5b5" stroke-width="1"/><path d="M3 35.00 H17" stroke="#c2c2c2" stroke-width="1.2"/><path d="M12.6 29.20 H17" stroke="#b5b5b5" stroke-width="1"/><path d="M12.6 23.40 H17" stroke="#b5b5b5" stroke-width="1"/><path d="M12.6 17.60 H17" stroke="#b5b5b5" stroke-width="1"/><path d="M12.6 11.80 H17" stroke="#b5b5b5" stroke-width="1"/><path d="M8 6.00 H17" stroke="#b5b5b5" stroke-width="1"/><path d="M12.6 0.20 H17" stroke="#b5b5b5" stroke-width="1"/></svg>
<div class="a t" style="left:52px;top:545.80px;font-size:9.8px;color:#7a7a7a;transform-origin:0 0;transform:translate(8.3px,0) rotate(90deg) scaleX(0.8)">-100</div>
<div class="a t" style="left:52px;top:487.80px;font-size:9.8px;color:#7a7a7a;transform-origin:0 0;transform:translate(8.3px,0) rotate(90deg) scaleX(0.8)">-50</div>
<div class="a t" style="left:52px;top:429.80px;font-size:9.8px;color:#7a7a7a;transform-origin:0 0;transform:translate(8.3px,0) rotate(90deg) scaleX(0.8)">0</div>
<div class="a t" style="left:52px;top:371.80px;font-size:9.8px;color:#7a7a7a;transform-origin:0 0;transform:translate(8.3px,0) rotate(90deg) scaleX(0.8)">50</div>
<div class="a t" style="left:52px;top:313.80px;font-size:9.8px;color:#7a7a7a;transform-origin:0 0;transform:translate(8.3px,0) rotate(90deg) scaleX(0.8)">100</div>
<div class="a t" style="left:52px;top:255.80px;font-size:9.8px;color:#7a7a7a;transform-origin:0 0;transform:translate(8.3px,0) rotate(90deg) scaleX(0.8)">150</div>
<div class="a t" style="left:52px;top:197.80px;font-size:9.8px;color:#7a7a7a;transform-origin:0 0;transform:translate(8.3px,0) rotate(90deg) scaleX(0.8)">200</div>
<div class="a" style="left:415px;top:148px;width:1px;height:13px;background:#6a9fd8"></div>
<div class="a" style="left:52px;top:193px;width:13px;height:1px;background:#6a9fd8"></div>
<div class="a" style="left:65px;top:161px;width:723.5px;height:408px;background:#000"></div>
<svg class="a" style="left:65px;top:161px" width="723.5" height="408"><path d="M0.09 0 V408" stroke="#4f4f4f" stroke-width="1.1"/><path d="M5.98 0 V408" stroke="#4f4f4f" stroke-width="1.1"/><path d="M11.87 0 V408" stroke="#4f4f4f" stroke-width="1.1"/><path d="M17.76 0 V408" stroke="#4f4f4f" stroke-width="1.1"/><path d="M23.65 0 V408" stroke="#4f4f4f" stroke-width="1.1"/><path d="M29.54 0 V408" stroke="#4f4f4f" stroke-width="1.1"/><path d="M35.43 0 V408" stroke="#4f4f4f" stroke-width="1.1"/><path d="M41.32 0 V408" stroke="#4f4f4f" stroke-width="1.1"/><path d="M47.21 0 V408" stroke="#4f4f4f" stroke-width="1.1"/><path d="M53.10 0 V408" stroke="#4f4f4f" stroke-width="1.1"/><path d="M58.99 0 V408" stroke="#4f4f4f" stroke-width="1.1"/><path d="M64.88 0 V408" stroke="#4f4f4f" stroke-width="1.1"/><path d="M70.77 0 V408" stroke="#4f4f4f" stroke-width="1.1"/><path d="M76.66 0 V408" stroke="#4f4f4f" stroke-width="1.1"/><path d="M82.55 0 V408" stroke="#4f4f4f" stroke-width="1.1"/><path d="M88.44 0 V408" stroke="#4f4f4f" stroke-width="1.1"/><path d="M94.33 0 V408" stroke="#4f4f4f" stroke-width="1.1"/><path d="M100.22 0 V408" stroke="#4f4f4f" stroke-width="1.1"/><path d="M106.11 0 V408" stroke="#4f4f4f" stroke-width="1.1"/><path d="M112.00 0 V408" stroke="#4f4f4f" stroke-width="1.1"/><path d="M117.89 0 V408" stroke="#4f4f4f" stroke-width="1.1"/><path d="M123.78 0 V408" stroke="#4f4f4f" stroke-width="1.1"/><path d="M129.67 0 V408" stroke="#4f4f4f" stroke-width="1.1"/><path d="M135.56 0 V408" stroke="#4f4f4f" stroke-width="1.1"/><path d="M141.45 0 V408" stroke="#4f4f4f" stroke-width="1.1"/><path d="M147.34 0 V408" stroke="#4f4f4f" stroke-width="1.1"/><path d="M153.23 0 V408" stroke="#4f4f4f" stroke-width="1.1"/><path d="M159.12 0 V408" stroke="#4f4f4f" stroke-width="1.1"/><path d="M165.01 0 V408" stroke="#4f4f4f" stroke-width="1.1"/><path d="M170.90 0 V408" stroke="#4f4f4f" stroke-width="1.1"/><path d="M176.79 0 V408" stroke="#4f4f4f" stroke-width="1.1"/><path d="M182.68 0 V408" stroke="#4f4f4f" stroke-width="1.1"/><path d="M188.57 0 V408" stroke="#4f4f4f" stroke-width="1.1"/><path d="M194.46 0 V408" stroke="#4f4f4f" stroke-width="1.1"/><path d="M200.35 0 V408" stroke="#4f4f4f" stroke-width="1.1"/><path d="M206.24 0 V408" stroke="#4f4f4f" stroke-width="1.1"/><path d="M212.13 0 V408" stroke="#4f4f4f" stroke-width="1.1"/><path d="M218.02 0 V408" stroke="#4f4f4f" stroke-width="1.1"/><path d="M223.91 0 V408" stroke="#4f4f4f" stroke-width="1.1"/><path d="M229.80 0 V408" stroke="#4f4f4f" stroke-width="1.1"/><path d="M235.69 0 V408" stroke="#4f4f4f" stroke-width="1.1"/><path d="M241.58 0 V408" stroke="#4f4f4f" stroke-width="1.1"/><path d="M247.47 0 V408" stroke="#4f4f4f" stroke-width="1.1"/><path d="M253.36 0 V408" stroke="#4f4f4f" stroke-width="1.1"/><path d="M259.25 0 V408" stroke="#4f4f4f" stroke-width="1.1"/><path d="M265.14 0 V408" stroke="#4f4f4f" stroke-width="1.1"/><path d="M271.03 0 V408" stroke="#4f4f4f" stroke-width="1.1"/><path d="M276.92 0 V408" stroke="#4f4f4f" stroke-width="1.1"/><path d="M282.81 0 V408" stroke="#4f4f4f" stroke-width="1.1"/><path d="M288.70 0 V408" stroke="#a8a8a8" stroke-width="1.3"/><path d="M294.59 0 V408" stroke="#4f4f4f" stroke-width="1.1"/><path d="M300.48 0 V408" stroke="#4f4f4f" stroke-width="1.1"/><path d="M306.37 0 V408" stroke="#4f4f4f" stroke-width="1.1"/><path d="M312.26 0 V408" stroke="#4f4f4f" stroke-width="1.1"/><path d="M318.15 0 V408" stroke="#4f4f4f" stroke-width="1.1"/><path d="M324.04 0 V408" stroke="#4f4f4f" stroke-width="1.1"/><path d="M329.93 0 V408" stroke="#4f4f4f" stroke-width="1.1"/><path d="M335.82 0 V408" stroke="#4f4f4f" stroke-width="1.1"/><path d="M341.71 0 V408" stroke="#4f4f4f" stroke-width="1.1"/><path d="M347.60 0 V408" stroke="#4f4f4f" stroke-width="1.1"/><path d="M353.49 0 V408" stroke="#4f4f4f" stroke-width="1.1"/><path d="M359.38 0 V408" stroke="#4f4f4f" stroke-width="1.1"/><path d="M365.27 0 V408" stroke="#4f4f4f" stroke-width="1.1"/><path d="M371.16 0 V408" stroke="#4f4f4f" stroke-width="1.1"/><path d="M377.05 0 V408" stroke="#4f4f4f" stroke-width="1.1"/><path d="M382.94 0 V408" stroke="#4f4f4f" stroke-width="1.1"/><path d="M388.83 0 V408" stroke="#4f4f4f" stroke-width="1.1"/><path d="M394.72 0 V408" stroke="#4f4f4f" stroke-width="1.1"/><path d="M400.61 0 V408" stroke="#4f4f4f" stroke-width="1.1"/><path d="M406.50 0 V408" stroke="#4f4f4f" stroke-width="1.1"/><path d="M412.39 0 V408" stroke="#4f4f4f" stroke-width="1.1"/><path d="M418.28 0 V408" stroke="#4f4f4f" stroke-width="1.1"/><path d="M424.17 0 V408" stroke="#4f4f4f" stroke-width="1.1"/><path d="M430.06 0 V408" stroke="#4f4f4f" stroke-width="1.1"/><path d="M435.95 0 V408" stroke="#4f4f4f" stroke-width="1.1"/><path d="M441.84 0 V408" stroke="#4f4f4f" stroke-width="1.1"/><path d="M447.73 0 V408" stroke="#4f4f4f" stroke-width="1.1"/><path d="M453.62 0 V408" stroke="#4f4f4f" stroke-width="1.1"/><path d="M459.51 0 V408" stroke="#4f4f4f" stroke-width="1.1"/><path d="M465.40 0 V408" stroke="#4f4f4f" stroke-width="1.1"/><path d="M471.29 0 V408" stroke="#4f4f4f" stroke-width="1.1"/><path d="M477.18 0 V408" stroke="#4f4f4f" stroke-width="1.1"/><path d="M483.07 0 V408" stroke="#4f4f4f" stroke-width="1.1"/><path d="M488.96 0 V408" stroke="#4f4f4f" stroke-width="1.1"/><path d="M494.85 0 V408" stroke="#4f4f4f" stroke-width="1.1"/><path d="M500.74 0 V408" stroke="#4f4f4f" stroke-width="1.1"/><path d="M506.63 0 V408" stroke="#4f4f4f" stroke-width="1.1"/><path d="M512.52 0 V408" stroke="#4f4f4f" stroke-width="1.1"/><path d="M518.41 0 V408" stroke="#4f4f4f" stroke-width="1.1"/><path d="M524.30 0 V408" stroke="#4f4f4f" stroke-width="1.1"/><path d="M530.19 0 V408" stroke="#4f4f4f" stroke-width="1.1"/><path d="M536.08 0 V408" stroke="#4f4f4f" stroke-width="1.1"/><path d="M541.97 0 V408" stroke="#4f4f4f" stroke-width="1.1"/><path d="M547.86 0 V408" stroke="#4f4f4f" stroke-width="1.1"/><path d="M553.75 0 V408" stroke="#4f4f4f" stroke-width="1.1"/><path d="M559.64 0 V408" stroke="#4f4f4f" stroke-width="1.1"/><path d="M565.53 0 V408" stroke="#4f4f4f" stroke-width="1.1"/><path d="M571.42 0 V408" stroke="#4f4f4f" stroke-width="1.1"/><path d="M577.31 0 V408" stroke="#4f4f4f" stroke-width="1.1"/><path d="M583.20 0 V408" stroke="#4f4f4f" stroke-width="1.1"/><path d="M589.09 0 V408" stroke="#4f4f4f" stroke-width="1.1"/><path d="M594.98 0 V408" stroke="#4f4f4f" stroke-width="1.1"/><path d="M600.87 0 V408" stroke="#4f4f4f" stroke-width="1.1"/><path d="M606.76 0 V408" stroke="#4f4f4f" stroke-width="1.1"/><path d="M612.65 0 V408" stroke="#4f4f4f" stroke-width="1.1"/><path d="M618.54 0 V408" stroke="#4f4f4f" stroke-width="1.1"/><path d="M624.43 0 V408" stroke="#4f4f4f" stroke-width="1.1"/><path d="M630.32 0 V408" stroke="#4f4f4f" stroke-width="1.1"/><path d="M636.21 0 V408" stroke="#4f4f4f" stroke-width="1.1"/><path d="M642.10 0 V408" stroke="#4f4f4f" stroke-width="1.1"/><path d="M647.99 0 V408" stroke="#4f4f4f" stroke-width="1.1"/><path d="M653.88 0 V408" stroke="#4f4f4f" stroke-width="1.1"/><path d="M659.77 0 V408" stroke="#4f4f4f" stroke-width="1.1"/><path d="M665.66 0 V408" stroke="#4f4f4f" stroke-width="1.1"/><path d="M671.55 0 V408" stroke="#4f4f4f" stroke-width="1.1"/><path d="M677.44 0 V408" stroke="#4f4f4f" stroke-width="1.1"/><path d="M683.33 0 V408" stroke="#4f4f4f" stroke-width="1.1"/><path d="M689.22 0 V408" stroke="#4f4f4f" stroke-width="1.1"/><path d="M695.11 0 V408" stroke="#4f4f4f" stroke-width="1.1"/><path d="M701.00 0 V408" stroke="#4f4f4f" stroke-width="1.1"/><path d="M706.89 0 V408" stroke="#4f4f4f" stroke-width="1.1"/><path d="M712.78 0 V408" stroke="#4f4f4f" stroke-width="1.1"/><path d="M718.67 0 V408" stroke="#4f4f4f" stroke-width="1.1"/><path d="M0 1.95 H723.5" stroke="#4f4f4f" stroke-width="1.1"/><path d="M0 7.84 H723.5" stroke="#4f4f4f" stroke-width="1.1"/><path d="M0 13.73 H723.5" stroke="#4f4f4f" stroke-width="1.1"/><path d="M0 19.62 H723.5" stroke="#4f4f4f" stroke-width="1.1"/><path d="M0 25.51 H723.5" stroke="#4f4f4f" stroke-width="1.1"/><path d="M0 31.40 H723.5" stroke="#4f4f4f" stroke-width="1.1"/><path d="M0 37.29 H723.5" stroke="#4f4f4f" stroke-width="1.1"/><path d="M0 43.18 H723.5" stroke="#4f4f4f" stroke-width="1.1"/><path d="M0 49.07 H723.5" stroke="#4f4f4f" stroke-width="1.1"/><path d="M0 54.96 H723.5" stroke="#4f4f4f" stroke-width="1.1"/><path d="M0 60.85 H723.5" stroke="#4f4f4f" stroke-width="1.1"/><path d="M0 66.74 H723.5" stroke="#4f4f4f" stroke-width="1.1"/><path d="M0 72.63 H723.5" stroke="#4f4f4f" stroke-width="1.1"/><path d="M0 78.52 H723.5" stroke="#4f4f4f" stroke-width="1.1"/><path d="M0 84.41 H723.5" stroke="#4f4f4f" stroke-width="1.1"/><path d="M0 90.30 H723.5" stroke="#4f4f4f" stroke-width="1.1"/><path d="M0 96.19 H723.5" stroke="#4f4f4f" stroke-width="1.1"/><path d="M0 102.08 H723.5" stroke="#4f4f4f" stroke-width="1.1"/><path d="M0 107.97 H723.5" stroke="#4f4f4f" stroke-width="1.1"/><path d="M0 113.86 H723.5" stroke="#4f4f4f" stroke-width="1.1"/><path d="M0 119.75 H723.5" stroke="#4f4f4f" stroke-width="1.1"/><path d="M0 125.64 H723.5" stroke="#4f4f4f" stroke-width="1.1"/><path d="M0 131.53 H723.5" stroke="#4f4f4f" stroke-width="1.1"/><path d="M0 137.42 H723.5" stroke="#4f4f4f" stroke-width="1.1"/><path d="M0 143.31 H723.5" stroke="#4f4f4f" stroke-width="1.1"/><path d="M0 149.20 H723.5" stroke="#4f4f4f" stroke-width="1.1"/><path d="M0 155.09 H723.5" stroke="#4f4f4f" stroke-width="1.1"/><path d="M0 160.98 H723.5" stroke="#4f4f4f" stroke-width="1.1"/><path d="M0 166.87 H723.5" stroke="#4f4f4f" stroke-width="1.1"/><path d="M0 172.76 H723.5" stroke="#4f4f4f" stroke-width="1.1"/><path d="M0 178.65 H723.5" stroke="#4f4f4f" stroke-width="1.1"/><path d="M0 184.54 H723.5" stroke="#4f4f4f" stroke-width="1.1"/><path d="M0 190.43 H723.5" stroke="#4f4f4f" stroke-width="1.1"/><path d="M0 196.32 H723.5" stroke="#4f4f4f" stroke-width="1.1"/><path d="M0 202.21 H723.5" stroke="#4f4f4f" stroke-width="1.1"/><path d="M0 208.10 H723.5" stroke="#4f4f4f" stroke-width="1.1"/><path d="M0 213.99 H723.5" stroke="#4f4f4f" stroke-width="1.1"/><path d="M0 219.88 H723.5" stroke="#4f4f4f" stroke-width="1.1"/><path d="M0 225.77 H723.5" stroke="#4f4f4f" stroke-width="1.1"/><path d="M0 231.66 H723.5" stroke="#4f4f4f" stroke-width="1.1"/><path d="M0 237.55 H723.5" stroke="#4f4f4f" stroke-width="1.1"/><path d="M0 243.44 H723.5" stroke="#4f4f4f" stroke-width="1.1"/><path d="M0 249.33 H723.5" stroke="#4f4f4f" stroke-width="1.1"/><path d="M0 255.22 H723.5" stroke="#4f4f4f" stroke-width="1.1"/><path d="M0 261.11 H723.5" stroke="#4f4f4f" stroke-width="1.1"/><path d="M0 267.00 H723.5" stroke="#a8a8a8" stroke-width="1.3"/><path d="M0 272.89 H723.5" stroke="#4f4f4f" stroke-width="1.1"/><path d="M0 278.78 H723.5" stroke="#4f4f4f" stroke-width="1.1"/><path d="M0 284.67 H723.5" stroke="#4f4f4f" stroke-width="1.1"/><path d="M0 290.56 H723.5" stroke="#4f4f4f" stroke-width="1.1"/><path d="M0 296.45 H723.5" stroke="#4f4f4f" stroke-width="1.1"/><path d="M0 302.34 H723.5" stroke="#4f4f4f" stroke-width="1.1"/><path d="M0 308.23 H723.5" stroke="#4f4f4f" stroke-width="1.1"/><path d="M0 314.12 H723.5" stroke="#4f4f4f" stroke-width="1.1"/><path d="M0 320.01 H723.5" stroke="#4f4f4f" stroke-width="1.1"/><path d="M0 325.90 H723.5" stroke="#4f4f4f" stroke-width="1.1"/><path d="M0 331.79 H723.5" stroke="#4f4f4f" stroke-width="1.1"/><path d="M0 337.68 H723.5" stroke="#4f4f4f" stroke-width="1.1"/><path d="M0 343.57 H723.5" stroke="#4f4f4f" stroke-width="1.1"/><path d="M0 349.46 H723.5" stroke="#4f4f4f" stroke-width="1.1"/><path d="M0 355.35 H723.5" stroke="#4f4f4f" stroke-width="1.1"/><path d="M0 361.24 H723.5" stroke="#4f4f4f" stroke-width="1.1"/><path d="M0 367.13 H723.5" stroke="#4f4f4f" stroke-width="1.1"/><path d="M0 373.02 H723.5" stroke="#4f4f4f" stroke-width="1.1"/><path d="M0 378.91 H723.5" stroke="#4f4f4f" stroke-width="1.1"/><path d="M0 384.80 H723.5" stroke="#4f4f4f" stroke-width="1.1"/><path d="M0 390.69 H723.5" stroke="#4f4f4f" stroke-width="1.1"/><path d="M0 396.58 H723.5" stroke="#4f4f4f" stroke-width="1.1"/><path d="M0 402.47 H723.5" stroke="#4f4f4f" stroke-width="1.1"/></svg>
<div class="a" style="left:788.5px;top:120.5px;width:1.5px;height:449px;background:#fff"></div>
<div class="a" style="left:790px;top:120.5px;width:5px;height:449px;background:#dadada;background-image:radial-gradient(#c0c0c0 0.6px,transparent 0.7px);background-size:2px 2px"></div>
<div class="a" style="left:789.8px;top:325.5px;width:5px;height:38.5px;background:#fff;border:1px solid #c8c8c8;border-radius:2px"></div>
<svg class="a" style="left:790.6px;top:342px;" width="4" height="6" viewBox="0 0 4 6"><path d="M0.5 0.5 L3.5 3 L0.5 5.5 Z" fill="#777"/></svg>
<svg class="a" style="left:0;top:0" width="950" height="569" viewBox="0 0 950 569"><rect x="336.8" y="317" width="146.2" height="76.6" fill="none" stroke="#e8b400" stroke-width="1.6"/><rect x="350.3" y="336.6" width="65.1" height="52.2" fill="none" stroke="#d2a600" stroke-width="1.3"/><rect x="418.4" y="336.6" width="23.8" height="52.2" fill="none" stroke="#d2a600" stroke-width="1.3"/><rect x="444.6" y="336.6" width="23.7" height="52.2" fill="none" stroke="#d2a600" stroke-width="1.3"/><path d="M374 348.8 H361 Q357 348.8 357 352.8 V366" fill="none" stroke="#8c1414" stroke-width="1.2"/><path d="M391.5 348.8 H404.6 Q408.4 348.8 408.4 352.8 V366" fill="none" stroke="#8c1414" stroke-width="1.2"/><path d="M377 356 H366 Q362.4 356 362.4 359 V366" fill="none" stroke="#8c1414" stroke-width="1.2"/><path d="M383 354 V357.5 H371 Q367.8 357.5 367.8 361 V366" fill="none" stroke="#8c1414" stroke-width="1.2"/><path d="M388 354 V359 H380 Q377 359 377 362 V366" fill="none" stroke="#8c1414" stroke-width="1.2"/><path d="M388 354 V360 H398 Q400 360 400 363 V366" fill="none" stroke="#8c1414" stroke-width="1.2"/><path d="M424.2 354 V366" fill="none" stroke="#8c1414" stroke-width="1.2"/><path d="M430.2 354 V366" fill="none" stroke="#8c1414" stroke-width="1.2"/><path d="M436.2 354 V366" fill="none" stroke="#8c1414" stroke-width="1.2"/><path d="M450.8 354 V366" fill="none" stroke="#8c1414" stroke-width="1.2"/><path d="M456.8 354 V366" fill="none" stroke="#8c1414" stroke-width="1.2"/><path d="M462.8 354 V366" fill="none" stroke="#8c1414" stroke-width="1.2"/><path d="M376 357.6 H381 M383 356.4 H387" stroke="#2244aa" stroke-width="1"/><rect x="373.5" y="345.1" width="18.4" height="9" fill="#000" stroke="#e8b400" stroke-width="1.7"/><circle cx="376.7" cy="349.6" r="1.7" fill="#000" stroke="#9a9a9a" stroke-width="0.9"/><circle cx="382.7" cy="349.6" r="1.7" fill="#000" stroke="#9a9a9a" stroke-width="0.9"/><circle cx="388.7" cy="349.6" r="1.7" fill="#000" stroke="#9a9a9a" stroke-width="0.9"/><rect x="353" y="365.4" width="18.4" height="9" fill="#000" stroke="#e8b400" stroke-width="1.7"/><circle cx="356.2" cy="369.9" r="1.7" fill="#000" stroke="#9a9a9a" stroke-width="0.9"/><circle cx="362.2" cy="369.9" r="1.7" fill="#000" stroke="#9a9a9a" stroke-width="0.9"/><circle cx="368.2" cy="369.9" r="1.7" fill="#000" stroke="#9a9a9a" stroke-width="0.9"/><rect x="373.5" y="365.4" width="18.4" height="9" fill="#000" stroke="#e8b400" stroke-width="1.7"/><circle cx="376.7" cy="369.9" r="1.7" fill="#000" stroke="#9a9a9a" stroke-width="0.9"/><circle cx="382.7" cy="369.9" r="1.7" fill="#000" stroke="#9a9a9a" stroke-width="0.9"/><circle cx="388.7" cy="369.9" r="1.7" fill="#000" stroke="#9a9a9a" stroke-width="0.9"/><rect x="394" y="365.4" width="18.4" height="9" fill="#000" stroke="#e8b400" stroke-width="1.7"/><circle cx="397.2" cy="369.9" r="1.7" fill="#000" stroke="#9a9a9a" stroke-width="0.9"/><circle cx="403.2" cy="369.9" r="1.7" fill="#000" stroke="#9a9a9a" stroke-width="0.9"/><circle cx="409.2" cy="369.9" r="1.7" fill="#000" stroke="#9a9a9a" stroke-width="0.9"/><rect x="420.8" y="344.8" width="18.4" height="9" fill="#000" stroke="#e8b400" stroke-width="1.7"/><circle cx="424.0" cy="349.3" r="1.7" fill="#000" stroke="#9a9a9a" stroke-width="0.9"/><circle cx="430.0" cy="349.3" r="1.7" fill="#000" stroke="#9a9a9a" stroke-width="0.9"/><circle cx="436.0" cy="349.3" r="1.7" fill="#000" stroke="#9a9a9a" stroke-width="0.9"/><rect x="420.8" y="365.4" width="18.4" height="9" fill="#000" stroke="#e8b400" stroke-width="1.7"/><circle cx="424.0" cy="369.9" r="1.7" fill="#000" stroke="#9a9a9a" stroke-width="0.9"/><circle cx="430.0" cy="369.9" r="1.7" fill="#000" stroke="#9a9a9a" stroke-width="0.9"/><circle cx="436.0" cy="369.9" r="1.7" fill="#000" stroke="#9a9a9a" stroke-width="0.9"/><rect x="447.4" y="344.8" width="18.4" height="9" fill="#000" stroke="#e8b400" stroke-width="1.7"/><circle cx="450.6" cy="349.3" r="1.7" fill="#000" stroke="#9a9a9a" stroke-width="0.9"/><circle cx="456.6" cy="349.3" r="1.7" fill="#000" stroke="#9a9a9a" stroke-width="0.9"/><circle cx="462.6" cy="349.3" r="1.7" fill="#000" stroke="#9a9a9a" stroke-width="0.9"/><rect x="447.4" y="365.4" width="18.4" height="9" fill="#000" stroke="#e8b400" stroke-width="1.7"/><circle cx="450.6" cy="369.9" r="1.7" fill="#000" stroke="#9a9a9a" stroke-width="0.9"/><circle cx="456.6" cy="369.9" r="1.7" fill="#000" stroke="#9a9a9a" stroke-width="0.9"/><circle cx="462.6" cy="369.9" r="1.7" fill="#000" stroke="#9a9a9a" stroke-width="0.9"/><path d="M376.7 341.3 V344.3" stroke="#b38f00" stroke-width="0.8"/><path d="M382.7 341.3 V344.3" stroke="#b38f00" stroke-width="0.8"/><path d="M388.7 341.3 V344.3" stroke="#b38f00" stroke-width="0.8"/><path d="M356.2 376.3 V379.3" stroke="#b38f00" stroke-width="0.8"/><path d="M362.2 376.3 V379.3" stroke="#b38f00" stroke-width="0.8"/><path d="M368.2 376.3 V379.3" stroke="#b38f00" stroke-width="0.8"/><path d="M376.7 376.3 V379.3" stroke="#b38f00" stroke-width="0.8"/><path d="M382.7 376.3 V379.3" stroke="#b38f00" stroke-width="0.8"/><path d="M388.7 376.3 V379.3" stroke="#b38f00" stroke-width="0.8"/><path d="M397.2 376.3 V379.3" stroke="#b38f00" stroke-width="0.8"/><path d="M403.2 376.3 V379.3" stroke="#b38f00" stroke-width="0.8"/><path d="M409.2 376.3 V379.3" stroke="#b38f00" stroke-width="0.8"/><path d="M424.0 341.0 V344.0" stroke="#b38f00" stroke-width="0.8"/><path d="M430.0 341.0 V344.0" stroke="#b38f00" stroke-width="0.8"/><path d="M436.0 341.0 V344.0" stroke="#b38f00" stroke-width="0.8"/><path d="M424.0 376.3 V379.3" stroke="#b38f00" stroke-width="0.8"/><path d="M430.0 376.3 V379.3" stroke="#b38f00" stroke-width="0.8"/><path d="M436.0 376.3 V379.3" stroke="#b38f00" stroke-width="0.8"/><path d="M450.6 341.0 V344.0" stroke="#b38f00" stroke-width="0.8"/><path d="M456.6 341.0 V344.0" stroke="#b38f00" stroke-width="0.8"/><path d="M462.6 341.0 V344.0" stroke="#b38f00" stroke-width="0.8"/><path d="M450.6 376.3 V379.3" stroke="#b38f00" stroke-width="0.8"/><path d="M456.6 376.3 V379.3" stroke="#b38f00" stroke-width="0.8"/><path d="M462.6 376.3 V379.3" stroke="#b38f00" stroke-width="0.8"/><path d="M355.5 384.2 H369.5" stroke="#b38f00" stroke-width="1.6" stroke-dasharray="2 0.6" opacity="0.8"/><path d="M376.5 384.2 H390.5" stroke="#b38f00" stroke-width="1.6" stroke-dasharray="2 0.6" opacity="0.8"/><path d="M397 384.2 H411" stroke="#b38f00" stroke-width="1.6" stroke-dasharray="2 0.6" opacity="0.8"/><path d="M423 384.2 H437" stroke="#b38f00" stroke-width="1.6" stroke-dasharray="2 0.6" opacity="0.8"/><path d="M449.5 384.2 H463.5" stroke="#b38f00" stroke-width="1.6" stroke-dasharray="2 0.6" opacity="0.8"/><rect x="343" y="357.8" width="4" height="4" fill="#555"/><rect x="472.6" y="357.8" width="4" height="4" fill="#555"/></svg>
<div class="a t" style="left:349.5px;top:321.72px;font-size:8.6px;color:#7c6300;transform:scaleX(1.0963);transform-origin:0 0;">Shelly AddOn - PCB-Sample</div>
<div class="a" style="left:78.1px;top:167px;width:183.1px;height:93.6px;background:#fafafa;border-radius:4px;overflow:hidden"><div style="height:19.4px;background:#ececec;border-bottom:1px solid #e2e2e2"></div></div>
<div class="a t" style="left:83.2px;top:171.57px;font-size:9.6px;color:#555;transform:scaleX(0.9634);transform-origin:0 0;">PCB-Werkzeuge</div>
<div class="a" style="left:247px;top:175.6px;width:10px;height:1.2px;background:#666"></div>
<svg class="a" style="left:86px;top:196px;" width="16" height="14" viewBox="0 0 16 14"><circle cx="1.5" cy="2.2" r="1.2" stroke="#333" stroke-width="1" fill="none"/><path d="M2.7 2.2 H6.8 V11 H11.8" stroke="#333" stroke-width="1" fill="none"/><circle cx="13.3" cy="11.2" r="1.3" stroke="#333" stroke-width="1" fill="none"/></svg>
<svg class="a" style="left:110px;top:198px;" width="16" height="14" viewBox="0 0 16 14"><circle cx="5.4" cy="5" r="4" stroke="#111" stroke-width="2.3" fill="none"/></svg>
<svg class="a" style="left:130px;top:196px;" width="16" height="14" viewBox="0 0 16 14"><circle cx="4" cy="4.2" r="3" stroke="#333" stroke-width="1.2" fill="none"/><path d="M7 4.2 H14 M4 7.2 V13" stroke="#333" stroke-width="1.5"/></svg>
<svg class="a" style="left:152px;top:197px;" width="16" height="14" viewBox="0 0 16 14"><path d="M0.6 0.6 H11.8 V3.6 H10.6 L10 2.4 H7.5 V10.8 H9 V12.2 H3.4 V10.8 H4.9 V2.4 H2.4 L1.8 3.6 H0.6 Z" stroke="#333" stroke-width="1" fill="none"/></svg>
<svg class="a" style="left:173px;top:196px;" width="16" height="14" viewBox="0 0 16 14"><path d="M6.8 12.6 A6 6 0 1 1 12.8 6.6" stroke="#333" stroke-width="1" fill="none"/><path d="M12.8 6.6 H7 V12.6" stroke="#333" stroke-width="0.8" fill="none" stroke-dasharray="1 1"/></svg>
<svg class="a" style="left:195px;top:196px;" width="16" height="14" viewBox="0 0 16 14"><path d="M6.8 12.6 A6 6 0 1 1 12.8 6.6" stroke="#333" stroke-width="1" fill="none"/><path d="M6.8 6.6 V12.6" stroke="#333" stroke-width="0.8" stroke-dasharray="1 1"/><circle cx="6.8" cy="12.6" r="0.9" fill="#333"/></svg>
<svg class="a" style="left:217px;top:196px;" width="16" height="14" viewBox="0 0 16 14"><circle cx="6.7" cy="6.7" r="6.1" stroke="#333" stroke-width="1" fill="none"/></svg>
<svg class="a" style="left:240px;top:195px;" width="16" height="14" viewBox="0 0 16 14"><path d="M3.4 8.6 V3.4 Q3.4 2.3 4.4 2.3 Q5.3 2.3 5.3 3.4 V7 V1.8 Q5.3 0.7 6.3 0.7 Q7.3 0.7 7.3 1.8 V7 V2.4 Q7.3 1.4 8.3 1.4 Q9.2 1.4 9.2 2.4 V7 V3.6 Q9.2 2.6 10.1 2.6 Q11 2.6 11 3.6 V9 Q11 13.4 7 13.6 Q4.4 13.6 2.6 11 L0.8 8 Q0.4 6.8 1.4 6.6 Q2.2 6.6 3.4 8.6" stroke="#333" stroke-width="1" fill="none"/></svg>
<svg class="a" style="left:87px;top:218px;" width="16" height="14" viewBox="0 0 16 14"><circle cx="6.6" cy="6.6" r="4" stroke="#333" stroke-width="1" fill="none"/><path d="M0.6 0.6 L3.8 3.8 M12.6 0.6 L9.4 3.8 M0.6 12.6 L3.8 9.4 M12.6 12.6 L9.4 9.4" stroke="#333" stroke-width="1" fill="none"/></svg>
<svg class="a" style="left:108.5px;top:219px;" width="16" height="14" viewBox="0 0 16 14"><rect x="0.6" y="0.6" width="13" height="11" stroke="#333" stroke-width="1" fill="none"/><path d="M0.8 7.6 Q3.2 4.4 6 7 Q8.6 9.4 13.4 6" stroke="#333" stroke-width="1" fill="none"/><circle cx="10.3" cy="3.8" r="0.9" fill="#333"/></svg>
<svg class="a" style="left:130.5px;top:218px;" width="16" height="14" viewBox="0 0 16 14"><path d="M1.6 2.2 V12.4 M0 10.6 L1.6 12.6 L3.2 10.6 M1.6 2.2 H12.8 M11 0.6 L13 2.2 L11 3.8" stroke="#333" stroke-width="1" fill="none"/><circle cx="1.6" cy="2.2" r="1" fill="#333"/></svg>
<svg class="a" style="left:152px;top:219px;" width="16" height="14" viewBox="0 0 16 14"><path d="M14 11.2 H0.8 L11.6 1" stroke="#333" stroke-width="1" fill="none"/><path d="M4.4 7.8 Q5.8 9.2 5.6 11" stroke="#333" stroke-width="0.7" fill="none"/></svg>
<svg class="a" style="left:173.5px;top:218px;" width="16" height="14" viewBox="0 0 16 14"><circle cx="1.6" cy="1.6" r="1.2" stroke="#333" stroke-width="1" fill="none"/><path d="M2.6 2.6 L12.2 11.6" stroke="#333" stroke-width="0.9" stroke-dasharray="1.4 1"/><circle cx="12.8" cy="12" r="1.3" stroke="#333" stroke-width="1" fill="none"/></svg>
<svg class="a" style="left:194px;top:218px;" width="16" height="14" viewBox="0 0 16 14"><path d="M0.6 6 H4.6 V0.6 H16 V7 H11.6 V12.4 H0.6 Z" stroke="#333" stroke-width="0.9" fill="none" stroke-dasharray="1.4 1"/></svg>
<svg class="a" style="left:216px;top:218px;" width="16" height="14" viewBox="0 0 16 14"><path d="M0.6 12.4 V5.6 H5.4 V0.6 H15.4 V12.4 Z" stroke="#333" stroke-width="1" fill="none"/></svg>
<svg class="a" style="left:239px;top:218px;" width="16" height="14" viewBox="0 0 16 14"><path d="M1 12.2 L12.6 1 M3.6 6.8 L6.8 10 M6.6 3.8 L9.8 7" stroke="#333" stroke-width="1" fill="none"/><circle cx="1.4" cy="11.8" r="1.1" fill="#333"/><circle cx="12.2" cy="1.4" r="1.1" fill="#333"/></svg>
<svg class="a" style="left:88px;top:240.5px;" width="16" height="14" viewBox="0 0 16 14"><rect x="0.6" y="0.6" width="11.4" height="11.4" stroke="#333" stroke-width="1" fill="none"/></svg>
<svg class="a" style="left:109.5px;top:240px;" width="16" height="14" viewBox="0 0 16 14"><rect x="3.4" y="3.4" width="5.2" height="5.2" stroke="#333" stroke-width="1" fill="none"/><rect x="5.4" y="5.4" width="5.2" height="5.2" stroke="#333" stroke-width="1" fill="none"/><circle cx="1.4" cy="1.4" r="0.9" stroke="#333" stroke-width="1" fill="none"/><circle cx="11.8" cy="1.4" r="0.9" stroke="#333" stroke-width="1" fill="none"/><circle cx="1.4" cy="11.8" r="0.9" stroke="#333" stroke-width="1" fill="none"/><circle cx="11.8" cy="11.8" r="0.9" stroke="#333" stroke-width="1" fill="none"/></svg>
<svg class="a" style="left:129.5px;top:240px;" width="16" height="14" viewBox="0 0 16 14"><rect x="0.6" y="0.6" width="14.6" height="11.8" stroke="#333" stroke-width="1" fill="none"/><rect x="8.2" y="7.2" width="7" height="5.2" fill="#777"/><path d="M10.6 7.2 V12.4 M13 7.2 V12.4" stroke="#fafafa" stroke-width="0.6"/></svg>
<div class="a" style="left:72.7px;top:446.8px;width:191.1px;height:102px;background:#fff;border-radius:4px;overflow:hidden;border:1px solid #e8e8e8"><div style="height:18.4px;background:#ececec"></div></div>
<div class="a t" style="left:77.5px;top:450.77px;font-size:9.6px;color:#555;transform:scaleX(0.9654);transform-origin:0 0;">Ebenen und Objekte</div>
<svg class="a" style="left:221px;top:451px;" width="11" height="11" viewBox="0 0 11 11"><path d="M6.5 0.8 L10.2 4.5 L8.8 5 L6.8 7.6 L7 9.4 L1.6 4 L3.4 4.2 L6 2.2 Z M3.6 7.4 L0.8 10.2" stroke="#555" stroke-width="1" fill="#555"/></svg>
<svg class="a" style="left:235.5px;top:450px;" width="11" height="11" viewBox="0 0 11 11"><path d="M9.38 5.86 L10.37 6.65 L9.76 8.12 L8.50 7.99 L7.99 8.50 L8.12 9.76 L6.65 10.37 L5.86 9.38 L5.14 9.38 L4.35 10.37 L2.88 9.76 L3.01 8.50 L2.50 7.99 L1.24 8.12 L0.63 6.65 L1.62 5.86 L1.62 5.14 L0.63 4.35 L1.24 2.88 L2.50 3.01 L3.01 2.50 L2.88 1.24 L4.35 0.63 L5.14 1.62 L5.86 1.62 L6.65 0.63 L8.12 1.24 L7.99 2.50 L8.50 3.01 L9.76 2.88 L10.37 4.35 L9.38 5.14 Z" stroke="#555" stroke-width="0.95" fill="none" stroke-linejoin="round"/><circle cx="5.5" cy="5.5" r="1.8" stroke="#555" stroke-width="0.95" fill="none"/></svg>
<div class="a" style="left:250.5px;top:455px;width:9px;height:1px;background:#666"></div>
<div class="a" style="left:73.5px;top:465.2px;width:190px;height:19.5px;background:#dcdcdc"></div>
<div class="a" style="left:73.5px;top:465.2px;width:68.8px;height:22px;background:#fff"></div>
<div class="a" style="left:142.3px;top:465.2px;width:1px;height:19.5px;background:#cfcfcf"></div>
<div class="a" style="left:215px;top:465.2px;width:1px;height:19.5px;background:#cfcfcf"></div>
<div class="a t" style="left:82.2px;top:470.18px;font-size:10.3px;color:#44659c;font-weight:bold;transform:scaleX(0.8940);transform-origin:0 0;">Alle.Ebenen</div>
<div class="a t" style="left:151px;top:470.58px;font-size:10.3px;color:#555;transform:scaleX(0.8974);transform-origin:0 0;">Kupferschicht</div>
<div class="a" style="left:223px;top:470px;width:40px;height:12px;overflow:hidden"><div class="t" style="position:absolute;left:0;top:0.6px;font-size:10.3px;color:#555">Kupferfreigabe</div></div>
<div class="a" style="left:73.5px;top:487px;width:189.3px;height:60.5px;background:#fff"></div>
<div class="a" style="left:98.6px;top:487.5px;width:162.6px;height:37px;background:#d9d9d9"></div>
<div class="a" style="left:73.8px;top:487.5px;width:24.8px;height:18.5px;background:#f00"></div>
<div class="a" style="left:73.8px;top:506px;width:24.8px;height:18.5px;background:#00f"></div>
<div class="a" style="left:73.8px;top:524.5px;width:24.8px;height:18.3px;background:#ffc600"></div>
<svg class="a" style="left:79px;top:527px;" width="15" height="14" viewBox="0 0 15 14"><path d="M1.6 12.4 L2.6 9.2 L9.8 2 L12 4.2 L4.8 11.4 Z" fill="#f3c000" stroke="#333" stroke-width="0.8" stroke-linejoin="round"/><path d="M9.8 2 L10.8 1 Q11.4 0.5 12 1 L13 2 Q13.5 2.6 13 3.2 L12 4.2 Z" fill="#f19a9a" stroke="#333" stroke-width="0.7"/><path d="M1.6 12.4 L2.6 9.2 L4.8 11.4 Z" fill="#fff" stroke="#333" stroke-width="0.6"/></svg>
<svg class="a" style="left:104.8px;top:493.7px;" width="13" height="8" viewBox="0 0 13 8"><path d="M0.6 4 Q6.4 -2.4 12.4 4 Q6.4 10.4 0.6 4 Z" stroke="#444" stroke-width="1" fill="#eee"/><circle cx="6.5" cy="4" r="2.4" fill="#444"/><path d="M0.6 3.2 Q6.4 -1.8 12.4 3.2" stroke="#444" stroke-width="1.4" fill="none"/></svg>
<svg class="a" style="left:104.8px;top:512.2px;" width="13" height="8" viewBox="0 0 13 8"><path d="M0.6 4 Q6.4 -2.4 12.4 4 Q6.4 10.4 0.6 4 Z" stroke="#444" stroke-width="1" fill="#eee"/><circle cx="6.5" cy="4" r="2.4" fill="#444"/><path d="M0.6 3.2 Q6.4 -1.8 12.4 3.2" stroke="#444" stroke-width="1.4" fill="none"/></svg>
<svg class="a" style="left:104.8px;top:530.4000000000001px;" width="13" height="8" viewBox="0 0 13 8"><path d="M0.6 4 Q6.4 -2.4 12.4 4 Q6.4 10.4 0.6 4 Z" stroke="#444" stroke-width="1" fill="#eee"/><circle cx="6.5" cy="4" r="2.4" fill="#444"/><path d="M0.6 3.2 Q6.4 -1.8 12.4 3.2" stroke="#444" stroke-width="1.4" fill="none"/></svg>
<div class="a t" style="left:123.8px;top:493.74px;font-size:10px;color:#555;transform:scaleX(0.9278);transform-origin:0 0;">Oberschicht</div>
<div class="a t" style="left:123.8px;top:512.03px;font-size:10px;color:#555;transform:scaleX(0.9554);transform-origin:0 0;">unterste Schicht</div>
<div class="a t" style="left:123.8px;top:530.53px;font-size:10px;color:#555;transform:scaleX(0.9372);transform-origin:0 0;">oberste Druckschicht</div>
<svg class="a" style="left:251px;top:538px;" width="10" height="10" viewBox="0 0 10 10"><path d="M1 9 L9 1 M4 9 L9 4 M7 9 L9 7" stroke="#888" stroke-width="0.8"/></svg>
<div class="a" style="left:795px;top:120.5px;width:141px;height:449px;background:#fff"></div>
<div class="a" style="left:795px;top:120.5px;width:141px;height:23.5px;background:#dedede"></div>
<div class="a t" style="left:802px;top:128.43px;font-size:9.3px;color:#444;transform:scaleX(0.9979);transform-origin:0 0;">Ausgewählte Objekte</div>
<div class="a t" style="left:905.8px;top:127.18px;font-size:10.3px;color:#555;">0</div>
<div class="a" style="left:795px;top:144px;width:141px;height:23px;background:#ececec"></div>
<svg class="a" style="left:800px;top:153px;" width="7" height="7" viewBox="0 0 7 7"><path d="M6.5 0.5 V6.5 H0.5 Z" fill="#c8c8c8"/></svg>
<div class="a t" style="left:809.5px;top:149.54px;font-size:10.7px;color:#333;">Canvas-Attribute</div>
<div class="a" style="left:795px;top:214.2px;width:141px;height:23px;background:#ececec"></div>
<svg class="a" style="left:800px;top:223.2px;" width="7" height="7" viewBox="0 0 7 7"><path d="M6.5 0.5 V6.5 H0.5 Z" fill="#c8c8c8"/></svg>
<div class="a t" style="left:809.5px;top:219.74px;font-size:10.7px;color:#333;">Netz</div>
<div class="a" style="left:795px;top:400.2px;width:141px;height:23px;background:#ececec"></div>
<svg class="a" style="left:800px;top:409.2px;" width="7" height="7" viewBox="0 0 7 7"><path d="M6.5 0.5 V6.5 H0.5 Z" fill="#c8c8c8"/></svg>
<div class="a t" style="left:809.5px;top:405.74px;font-size:10.7px;color:#333;">Andere</div>
<div class="a t" style="left:802px;top:173.27px;font-size:9.6px;color:#555;transform:scaleX(0.9583);transform-origin:0 0;">Einheiten</div>
<div class="a" style="left:873.3px;top:170.4px;width:53.3px;height:18.8px;background:#fff;border:1px solid #dcdcdc;border-radius:1px"></div>
<div class="a t" style="left:880.5px;top:175.13px;font-size:10px;color:#444;">mm</div>
<svg class="a" style="left:917px;top:177.8px;" width="8" height="5" viewBox="0 0 8 5"><path d="M0.8 0.8 L3.8 3.8 L6.8 0.8" stroke="#222" stroke-width="1.5" fill="none"/></svg>
<div class="a t" style="left:802px;top:196.77px;font-size:9.6px;color:#555;transform:scaleX(0.9583);transform-origin:0 0;">Hintergrund</div>
<div class="a" style="left:873.5px;top:193.9px;width:53px;height:18.2px;background:#000"></div>
<div class="a t" style="left:877px;top:198.44px;font-size:10px;color:#fff;font-weight:bold;transform:scaleX(0.9800);transform-origin:0 0;">#000000</div>
<div class="a t" style="left:802px;top:242.47px;font-size:9.6px;color:#555;transform:scaleX(0.9583);transform-origin:0 0;">Raster anzeigen</div>
<div class="a" style="left:873.3px;top:239.6px;width:53.3px;height:18.8px;background:#fff;border:1px solid #dcdcdc;border-radius:1px"></div>
<div class="a t" style="left:880.5px;top:244.33px;font-size:10px;color:#444;">Ja</div>
<svg class="a" style="left:917px;top:247.0px;" width="8" height="5" viewBox="0 0 8 5"><path d="M0.8 0.8 L3.8 3.8 L6.8 0.8" stroke="#222" stroke-width="1.5" fill="none"/></svg>
<div class="a t" style="left:802px;top:265.77px;font-size:9.6px;color:#555;transform:scaleX(0.9583);transform-origin:0 0;">Rasterfarbe</div>
<div class="a" style="left:873.3px;top:262.9px;width:53.3px;height:18.8px;background:#fff;border:1px solid #dcdcdc;border-radius:1px"></div>
<div class="a t" style="left:877.5px;top:267.60px;font-size:9.8px;color:#444;transform:scaleX(0.9592);transform-origin:0 0;">#FFFFFF</div>
<div class="a t" style="left:802px;top:289.07px;font-size:9.6px;color:#555;transform:scaleX(0.9583);transform-origin:0 0;">Rasterstil</div>
<div class="a" style="left:873.3px;top:286.2px;width:53.3px;height:18.8px;background:#fff;border:1px solid #dcdcdc;border-radius:1px"></div>
<div class="a t" style="left:880.5px;top:290.94px;font-size:10px;color:#444;">Linie</div>
<svg class="a" style="left:917px;top:293.59999999999997px;" width="8" height="5" viewBox="0 0 8 5"><path d="M0.8 0.8 L3.8 3.8 L6.8 0.8" stroke="#222" stroke-width="1.5" fill="none"/></svg>
<div class="a t" style="left:802px;top:312.37px;font-size:9.6px;color:#555;transform:scaleX(0.9583);transform-origin:0 0;">Schnappschuss</div>
<div class="a" style="left:873.3px;top:309.5px;width:53.3px;height:18.8px;background:#fff;border:1px solid #dcdcdc;border-radius:1px"></div>
<div class="a t" style="left:880.5px;top:314.24px;font-size:10px;color:#444;">Ja</div>
<svg class="a" style="left:917px;top:316.9px;" width="8" height="5" viewBox="0 0 8 5"><path d="M0.8 0.8 L3.8 3.8 L6.8 0.8" stroke="#222" stroke-width="1.5" fill="none"/></svg>
<div class="a t" style="left:802px;top:335.67px;font-size:9.6px;color:#555;transform:scaleX(0.9583);transform-origin:0 0;">Rastergröße</div>
<div class="a" style="left:873.3px;top:332.8px;width:53.3px;height:18.8px;background:#fff;border:1px solid #dcdcdc;border-radius:1px"></div>
<div class="a t" style="left:877.5px;top:337.50px;font-size:9.8px;color:#444;transform:scaleX(0.9592);transform-origin:0 0;">2.540mm</div>
<div class="a t" style="left:802px;top:358.97px;font-size:9.6px;color:#555;transform:scaleX(0.9583);transform-origin:0 0;">Montagegröße</div>
<div class="a" style="left:873.3px;top:356.1px;width:53.3px;height:18.8px;background:#fff;border:1px solid #dcdcdc;border-radius:1px"></div>
<div class="a t" style="left:877.5px;top:360.80px;font-size:9.8px;color:#444;transform:scaleX(0.9592);transform-origin:0 0;">0.127mm</div>
<div class="a t" style="left:802px;top:382.27px;font-size:9.6px;color:#555;transform:scaleX(0.9583);transform-origin:0 0;">Einrasten mit ...</div>
<div class="a" style="left:873.3px;top:379.4px;width:53.3px;height:18.8px;background:#fff;border:1px solid #dcdcdc;border-radius:1px"></div>
<div class="a t" style="left:877.5px;top:384.10px;font-size:9.8px;color:#444;transform:scaleX(0.9592);transform-origin:0 0;">0.127mm</div>
<div class="a t" style="left:802px;top:428.37px;font-size:9.6px;color:#555;transform:scaleX(0.9583);transform-origin:0 0;">Straßenbreite</div>
<div class="a" style="left:873.3px;top:425.5px;width:53.3px;height:18.8px;background:#fff;border:1px solid #dcdcdc;border-radius:1px"></div>
<div class="a t" style="left:877.5px;top:430.20px;font-size:9.8px;color:#444;transform:scaleX(0.9592);transform-origin:0 0;">0.254mm</div>
<div class="a t" style="left:802px;top:451.67px;font-size:9.6px;color:#555;transform:scaleX(0.9583);transform-origin:0 0;">Routing-Abstand</div>
<div class="a" style="left:873.3px;top:448.8px;width:53.3px;height:18.8px;background:#fff;border:1px solid #dcdcdc;border-radius:1px"></div>
<div class="a t" style="left:877.5px;top:453.50px;font-size:9.8px;color:#444;transform:scaleX(0.9592);transform-origin:0 0;">0.152mm</div>
<div class="a t" style="left:802px;top:474.97px;font-size:9.6px;color:#555;transform:scaleX(0.9583);transform-origin:0 0;">Routing-Winkel</div>
<div class="a" style="left:873.3px;top:472.1px;width:53.3px;height:18.8px;background:#fff;border:1px solid #dcdcdc;border-radius:1px"></div>
<div class="a t" style="left:880.5px;top:476.84px;font-size:10px;color:#444;">45°</div>
<svg class="a" style="left:917px;top:479.5px;" width="8" height="5" viewBox="0 0 8 5"><path d="M0.8 0.8 L3.8 3.8 L6.8 0.8" stroke="#222" stroke-width="1.5" fill="none"/></svg>
<div class="a t" style="left:802px;top:498.27px;font-size:9.6px;color:#555;transform:scaleX(0.9583);transform-origin:0 0;">Entferne die ...</div>
<div class="a" style="left:873.3px;top:495.4px;width:53.3px;height:18.8px;background:#fff;border:1px solid #dcdcdc;border-radius:1px"></div>
<div class="a t" style="left:880.5px;top:500.13px;font-size:10px;color:#444;">Ja</div>
<svg class="a" style="left:917px;top:502.79999999999995px;" width="8" height="5" viewBox="0 0 8 5"><path d="M0.8 0.8 L3.8 3.8 L6.8 0.8" stroke="#222" stroke-width="1.5" fill="none"/></svg>
<div class="a t" style="left:802px;top:521.57px;font-size:9.6px;color:#555;transform:scaleX(0.9583);transform-origin:0 0;">Kupferzone</div>
<div class="a" style="left:873.3px;top:518.7px;width:53.3px;height:18.8px;background:#fff;border:1px solid #dcdcdc;border-radius:1px"></div>
<div class="a t" style="left:880.5px;top:523.44px;font-size:10px;color:#444;">Zeigen</div>
<svg class="a" style="left:917px;top:526.1px;" width="8" height="5" viewBox="0 0 8 5"><path d="M0.8 0.8 L3.8 3.8 L6.8 0.8" stroke="#222" stroke-width="1.5" fill="none"/></svg>
<div class="a" style="left:795px;top:541.6px;width:141px;height:6.5px;background:#dcdcdc"></div>
<div class="a" style="left:795px;top:548px;width:141px;height:21px;background:#efefef"></div>
<div class="a" style="left:863.3px;top:548px;width:1px;height:21px;background:#d6d6d6"></div>
<div class="a t" style="left:802px;top:552.67px;font-size:9.6px;color:#555;">Maus X</div>
<div class="a t" style="left:868px;top:552.37px;font-size:9.6px;color:#555;">53.467mm</div>
<div class="a" style="left:936px;top:120.5px;width:13px;height:449px;background:#f8f8f8"></div>
<svg class="a" style="left:938px;top:125px;" width="9" height="6" viewBox="0 0 9 6"><path d="M0.5 5.5 L4.5 0.5 L8.5 5.5 Z" fill="#8a8a8a"/></svg>
<div class="a" style="left:939px;top:134.5px;width:6.5px;height:371px;background:#8a8a8a;border-radius:3.25px"></div>
<svg class="a" style="left:938px;top:558px;" width="9" height="6" viewBox="0 0 9 6"><path d="M0.5 0.5 L4.5 5.5 L8.5 0.5 Z" fill="#8a8a8a"/></svg>
<div class="a" style="left:822.5px;top:444px;width:104.5px;height:48.5px;background:#5089f2;border-radius:6px"></div>
<div class="a" style="left:867.5px;top:486.5px;width:12.5px;height:12.5px;border-radius:50%;background:#5089f2"></div>
<div class="a" style="left:883.3px;top:496.2px;width:7.2px;height:7.2px;border-radius:50%;background:#5089f2"></div>
<div class="a t" style="left:824px;top:462.48px;font-size:11.6px;color:#fff;font-weight:bold;font-style:italic;transform:scaleX(0.9263);transform-origin:0 0;">Brauchen Sie Hilfe?</div>
<div class="a" style="left:918px;top:440px;width:15px;height:15px;border-radius:50%;background:#5089f2"></div>
<svg class="a" style="left:921.6px;top:443.4px;" width="8" height="8" viewBox="0 0 8 8"><path d="M1 1 L7 7 M7 1 L1 7" stroke="#fff" stroke-width="1.8"/></svg>
<div class="a" style="left:884.8px;top:507.3px;width:45.5px;height:45.5px;border-radius:50%;background:#5089f2"></div>
<svg class="a" style="left:895px;top:517px;" width="26" height="26" viewBox="0 0 26 26"><path d="M13 2.5 Q22.6 2.5 22.6 11.8 Q22.6 21 13 21 Q11.6 21 10.2 20.6 L5.4 23.4 L6.2 19 Q3.4 16.4 3.4 11.8 Q3.4 2.5 13 2.5 Z" fill="#fff"/><path d="M10.4 15.6 Q13.4 17.6 16.6 15.6" stroke="#5089f2" stroke-width="1.4" fill="none" stroke-linecap="round"/></svg>
<div class="a" style="left:439px;top:89px;width:182.7px;height:183.3px;background:#f8f8f8;border:1px solid #dedede;box-shadow:0 1px 3px rgba(0,0,0,0.18)"></div>
<div class="a" style="left:441.5px;top:112.2px;width:177.5px;height:1px;background:#e0e0e0"></div>
<div class="a" style="left:441.5px;top:192px;width:177.5px;height:1px;background:#e0e0e0"></div>
<div class="a" style="left:441.8px;top:195.5px;width:176.9px;height:18.2px;background:#4f87f0"></div>
<div class="a t" style="left:461.6px;top:97.00px;font-size:10.4px;color:#444;transform:scaleX(0.9672);transform-origin:0 0;">Kreuzungstest</div>
<div class="a t" style="left:461.6px;top:121.00px;font-size:10.4px;color:#444;transform:scaleX(0.9672);transform-origin:0 0;">Linienfarbe</div>
<div class="a t" style="left:461.6px;top:139.50px;font-size:10.4px;color:#444;transform:scaleX(0.9672);transform-origin:0 0;">Ebenenmanager...</div>
<div class="a t" style="left:461.6px;top:158.00px;font-size:10.4px;color:#444;transform:scaleX(0.9672);transform-origin:0 0;">Medienbereichsleiter...</div>
<div class="a t" style="left:461.6px;top:176.50px;font-size:10.4px;color:#444;transform:scaleX(0.9672);transform-origin:0 0;">3D-Modellmanager...</div>
<div class="a t" style="left:461.6px;top:201.20px;font-size:10.4px;color:#fff;transform:scaleX(0.9672);transform-origin:0 0;">Plattengrenze betreten...</div>
<div class="a t" style="left:461.6px;top:219.70px;font-size:10.4px;color:#444;transform:scaleX(0.9672);transform-origin:0 0;">Träne</div>
<div class="a t" style="left:461.6px;top:238.20px;font-size:10.4px;color:#444;transform:scaleX(0.9672);transform-origin:0 0;">Weitere Paneele</div>
<div class="a t" style="left:461.6px;top:256.60px;font-size:10.4px;color:#aaa;transform:scaleX(0.9672);transform-origin:0 0;">Chargenprozesse für Kupfer...</div>
<div class="a t" style="left:578px;top:97.40px;font-size:10.4px;color:#444;transform:scaleX(0.9343);transform-origin:0 0;">Shift+X</div>
<div class="a" style="left:508px;top:72.6px;width:18px;height:18px;border-radius:50%;background:#8b0e0e"></div>
<div class="a t" style="left:513.4px;top:75.53px;font-size:12.6px;color:#fff;font-weight:bold;transform:scaleX(1.0276);transform-origin:0 0;">1</div>
<div class="a" style="left:572.5px;top:193.2px;width:17.6px;height:17.6px;border-radius:50%;background:#8b0e0e"></div>
<div class="a t" style="left:577.6999999999999px;top:195.93px;font-size:12.6px;color:#fff;font-weight:bold;transform:scaleX(1.0276);transform-origin:0 0;">2</div>
<svg class="a" style="left:582px;top:207px;" width="15" height="17" viewBox="0 0 15 17"><path d="M4.4 9.6 V2 Q4.4 0.7 5.6 0.7 Q6.8 0.7 6.8 2 V7.2 Q7 6.2 8 6.2 Q9 6.2 9.2 7.3 Q9.4 6.6 10.3 6.6 Q11.2 6.6 11.4 7.7 Q11.8 7.2 12.5 7.3 Q13.6 7.5 13.6 8.8 V12 Q13.6 15.8 10 16.2 H7.4 Q5.6 16.2 4.4 14.4 L1.2 10 Q0.6 9 1.4 8.4 Q2.4 7.8 3.2 8.7 Z" fill="#fff" stroke="#222" stroke-width="0.9"/><path d="M6.8 7.2 V11 M9.2 7.3 V11 M11.4 7.7 V11" stroke="#222" stroke-width="0.6"/></svg>
<div class="a" style="left:0;top:0;width:950px;height:569px;border:1px solid #6b6e73;border-radius:7px 7px 6px 6px;pointer-events:none;z-index:50"></div></body></html>
